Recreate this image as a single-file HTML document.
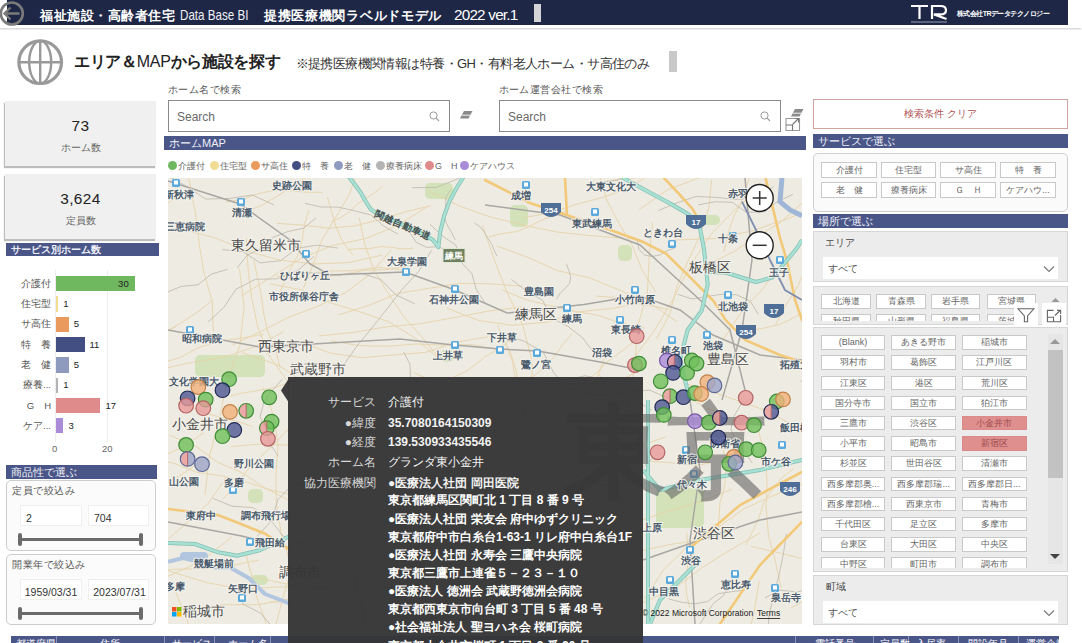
<!DOCTYPE html>
<html><head><meta charset="utf-8"><style>
*{margin:0;padding:0;box-sizing:border-box}
html,body{width:1082px;height:643px;overflow:hidden;background:#fff;font-family:"Liberation Sans",sans-serif;color:#333}
.a{position:absolute}
.l{position:absolute;white-space:nowrap}
.sec{position:absolute;background:#4b5688;color:#eef0f8;font-size:11px;line-height:14px;padding-left:5px;white-space:nowrap;overflow:hidden}
.card{position:absolute;background:#f0f0f0;box-shadow:-1px 2px 1px #bdbdbd}
.btn{position:absolute;background:#fff;border:1px solid #c9c9c9;color:#666;text-align:center;white-space:nowrap;overflow:hidden}
.gbox{position:absolute;border:1px solid #d6d6d6;background:#ececec}
</style></head><body>
<div class="a" style="left:7px;top:0px;width:1061px;height:25px;background:#1e2746"></div>
<div class="a" style="left:0px;top:28px;width:1081px;height:2px;background:linear-gradient(#d6d6da,#f2f2f4)"></div>
<svg class="a" style="left:0;top:0" width="30" height="30"><circle cx="11.8" cy="13.5" r="11" fill="none" stroke="#7a7a7a" stroke-width="2.6"/><path d="M19.5 13.5H4.5M10.5 7.5L4.5 13.5L10.5 19.5" fill="none" stroke="#7a7a7a" stroke-width="2.4"/></svg>
<div class="l" style="left:40px;top:6.5px;font-size:13px;line-height:17px;color:#fff;font-weight:bold;letter-spacing:0.5px">福祉施設・高齢者住宅</div>
<div class="l" style="left:180px;top:6px;font-size:14.5px;line-height:18.5px;color:#eef0f6;transform:scaleX(0.8);transform-origin:0 0">Data Base BI</div>
<div class="l" style="left:264px;top:6.5px;font-size:13px;line-height:17px;color:#fff;font-weight:bold;letter-spacing:0.7px">提携医療機関ラベルドモデル</div>
<div class="l" style="left:454px;top:5px;font-size:15.3px;line-height:19.3px;color:#fff;letter-spacing:-0.8px">2022 ver.1</div>
<div class="a" style="left:534px;top:4px;width:7px;height:18px;background:#d4d4d8"></div>
<svg class="a" style="left:908px;top:2px" width="42" height="22"><g fill="none" stroke="#fff" stroke-width="2.2"><path d="M3 4H20M11.5 4V17"/><path d="M24 17V4H32.5Q38 4 38 8.2Q38 12.4 32.5 12.4H26L38.5 17"/></g><rect x="3" y="19.5" width="36" height="1" fill="#9aa0b4"/></svg>
<div class="l" style="left:957px;top:7.5px;font-size:7px;line-height:11px;color:#fff;font-weight:bold;letter-spacing:-0.55px">株式会社TRデータテクノロジー</div>
<svg class="a" style="left:14px;top:36px" width="52" height="52"><g fill="none" stroke="#999"><circle cx="26.2" cy="26.2" r="21.3" stroke-width="3.2"/><ellipse cx="26.2" cy="26.2" rx="11" ry="21.3" stroke-width="2.4"/><path d="M5 26.2H47.4M26.2 5V47.4" stroke-width="2.4"/></g></svg>
<div class="l" style="left:74px;top:52px;font-size:16px;line-height:20px;color:#222;font-weight:bold;letter-spacing:-0.3px">エリア＆<span style="font-weight:normal">MAP</span>から施設を探す</div>
<div class="l" style="left:295.5px;top:55px;font-size:13px;line-height:17px;color:#333;letter-spacing:-0.58px">※提携医療機関情報は特養・GH・有料老人ホーム・サ高住のみ</div>
<div class="a" style="left:669px;top:51px;width:8px;height:21px;background:#c8c8c8"></div>
<div class="card" style="left:5px;top:101px;width:151px;height:65px"></div>
<div class="l" style="left:5px;top:116px;width:151px;text-align:center;font-size:15.4px;line-height:20px;color:#222;letter-spacing:0.4px">73</div>
<div class="l" style="left:5px;top:142px;width:151px;text-align:center;font-size:10px;line-height:12px;color:#666">ホーム数</div>
<div class="card" style="left:5px;top:174px;width:151px;height:65px"></div>
<div class="l" style="left:5px;top:189px;width:151px;text-align:center;font-size:15.4px;line-height:20px;color:#222;letter-spacing:0.4px">3,624</div>
<div class="l" style="left:5px;top:215px;width:151px;text-align:center;font-size:10px;line-height:12px;color:#666">定員数</div>
<div class="sec" style="left:6px;top:243px;width:153px;height:13px;font-weight:bold;font-size:10px;line-height:13px">サービス別ホーム数</div>
<div class="a" style="left:55px;top:270px;width:1px;height:172px;background:#eee"></div>
<div class="a" style="left:107px;top:270px;width:1px;height:172px;background:#eee"></div>
<div class="l" style="left:0;top:276.7px;width:51px;text-align:right;font-size:9.5px;line-height:14px;color:#555">介護付</div>
<div class="a" style="left:55.5px;top:276.0px;width:79.2px;height:15.4px;background:#6fb85f"></div>
<div class="l" style="left:110.7px;top:276.7px;width:18px;text-align:right;font-size:9.5px;line-height:14px;color:#222">30</div>
<div class="l" style="left:0;top:297.0px;width:51px;text-align:right;font-size:9.5px;line-height:14px;color:#555">住宅型</div>
<div class="a" style="left:55.5px;top:296.3px;width:2.8px;height:15.4px;background:#f1dc94"></div>
<div class="l" style="left:63.3px;top:297.0px;font-size:9.5px;line-height:14px;color:#222">1</div>
<div class="l" style="left:0;top:317.3px;width:51px;text-align:right;font-size:9.5px;line-height:14px;color:#555">サ高住</div>
<div class="a" style="left:55.5px;top:316.6px;width:13.2px;height:15.4px;background:#eb9a5e"></div>
<div class="l" style="left:73.7px;top:317.3px;font-size:9.5px;line-height:14px;color:#222">5</div>
<div class="l" style="left:0;top:337.6px;width:51px;text-align:right;font-size:9.5px;line-height:14px;color:#555">特　養</div>
<div class="a" style="left:55.5px;top:336.9px;width:29.0px;height:15.4px;background:#434f82"></div>
<div class="l" style="left:89.5px;top:337.6px;font-size:9.5px;line-height:14px;color:#222">11</div>
<div class="l" style="left:0;top:357.9px;width:51px;text-align:right;font-size:9.5px;line-height:14px;color:#555">老　健</div>
<div class="a" style="left:55.5px;top:357.2px;width:13.2px;height:15.4px;background:#8f9abf"></div>
<div class="l" style="left:73.7px;top:357.9px;font-size:9.5px;line-height:14px;color:#222">5</div>
<div class="l" style="left:0;top:378.2px;width:51px;text-align:right;font-size:9.5px;line-height:14px;color:#555">療養...</div>
<div class="a" style="left:55.5px;top:377.5px;width:2.8px;height:15.4px;background:#b4b4b4"></div>
<div class="l" style="left:63.3px;top:378.2px;font-size:9.5px;line-height:14px;color:#222">1</div>
<div class="l" style="left:0;top:398.5px;width:51px;text-align:right;font-size:9.5px;line-height:14px;color:#555">G　H</div>
<div class="a" style="left:55.5px;top:397.8px;width:44.9px;height:15.4px;background:#df8b8b"></div>
<div class="l" style="left:105.4px;top:398.5px;font-size:9.5px;line-height:14px;color:#222">17</div>
<div class="l" style="left:0;top:418.8px;width:51px;text-align:right;font-size:9.5px;line-height:14px;color:#555">ケア...</div>
<div class="a" style="left:55.5px;top:418.1px;width:7.9px;height:15.4px;background:#a98bd8"></div>
<div class="l" style="left:68.4px;top:418.8px;font-size:9.5px;line-height:14px;color:#222">3</div>
<div class="l" style="left:52px;top:442px;font-size:9.5px;line-height:13.5px;color:#666;">0</div>
<div class="l" style="left:102px;top:442px;font-size:9.5px;line-height:13.5px;color:#666;">20</div>
<div class="sec" style="left:6px;top:465px;width:151px;height:14px">商品性で選ぶ</div>
<div class="a" style="left:6px;top:480px;width:150px;height:71px;border:1px solid #cdcdcd;border-radius:5px;background:#fbfbfb"></div>
<div class="l" style="left:12px;top:484px;font-size:10px;line-height:14px;color:#555;letter-spacing:0.5px">定員で絞込み</div>
<div class="a" style="left:20px;top:505px;width:62px;height:21px;background:#fff;border:1px solid #efefef"></div>
<div class="a" style="left:88px;top:505px;width:61px;height:21px;background:#fff;border:1px solid #efefef"></div>
<div class="l" style="left:26px;top:511px;font-size:10.5px;line-height:14.5px;color:#333;">2</div>
<div class="l" style="left:94px;top:511px;font-size:10.5px;line-height:14.5px;color:#333;">704</div>
<div class="a" style="left:19px;top:538px;width:123px;height:3px;background:#6b6b6b"></div>
<div class="a" style="left:18px;top:533px;width:4px;height:13px;background:#6b6b6b;border-radius:2px"></div>
<div class="a" style="left:139px;top:533px;width:4px;height:13px;background:#6b6b6b;border-radius:2px"></div>
<div class="a" style="left:6px;top:554px;width:150px;height:71px;border:1px solid #cdcdcd;border-radius:5px;background:#fbfbfb"></div>
<div class="l" style="left:12px;top:558px;font-size:10px;line-height:14px;color:#555;letter-spacing:0.5px">開業年で絞込み</div>
<div class="a" style="left:20px;top:579px;width:62px;height:21px;background:#fff;border:1px solid #efefef"></div>
<div class="a" style="left:88px;top:579px;width:61px;height:21px;background:#fff;border:1px solid #efefef"></div>
<div class="l" style="left:20px;top:585px;width:62px;text-align:center;font-size:10.5px;line-height:14px;color:#333">1959/03/31</div>
<div class="l" style="left:89px;top:585px;width:61px;text-align:center;font-size:10.5px;line-height:14px;color:#333">2023/07/31</div>
<div class="a" style="left:19px;top:612px;width:123px;height:3px;background:#6b6b6b"></div>
<div class="a" style="left:18px;top:607px;width:4px;height:13px;background:#6b6b6b;border-radius:2px"></div>
<div class="a" style="left:139px;top:607px;width:4px;height:13px;background:#6b6b6b;border-radius:2px"></div>
<div class="l" style="left:168px;top:83px;font-size:10px;line-height:14px;color:#555;letter-spacing:0.45px">ホーム名で検索</div>
<div class="a" style="left:168px;top:100px;width:282px;height:32px;border:1px solid #8a8a8a;background:#fff"></div>
<div class="l" style="left:177px;top:109px;font-size:12px;line-height:16px;color:#6a6a6a;">Search</div>
<svg class="a" style="left:428px;top:110px" width="14" height="14"><circle cx="5.5" cy="5.5" r="3.6" fill="none" stroke="#999" stroke-width="1"/><path d="M8.2 8.2L11 11" stroke="#999" stroke-width="1.1"/></svg>
<svg class="a" style="left:459px;top:110px" width="14" height="10"><path d="M5 1H13.5L9.5 8.5H1Z" fill="#8a8a8a"/><path d="M3 5.2H11.5" stroke="#fff" stroke-width="0.9"/></svg>
<div class="l" style="left:498.5px;top:83px;font-size:10px;line-height:14px;color:#555;letter-spacing:0.45px">ホーム運営会社で検索</div>
<div class="a" style="left:499px;top:100px;width:282px;height:32px;border:1px solid #8a8a8a;background:#fff"></div>
<div class="l" style="left:508px;top:109px;font-size:12px;line-height:16px;color:#6a6a6a;">Search</div>
<svg class="a" style="left:759px;top:110px" width="14" height="14"><circle cx="5.5" cy="5.5" r="3.6" fill="none" stroke="#999" stroke-width="1"/><path d="M8.2 8.2L11 11" stroke="#999" stroke-width="1.1"/></svg>
<svg class="a" style="left:790px;top:108px" width="14" height="10"><path d="M5 1H13.5L9.5 8.5H1Z" fill="#8a8a8a"/><path d="M3 5.2H11.5" stroke="#fff" stroke-width="0.9"/></svg>
<svg class="a" style="left:785px;top:117px" width="16" height="14"><g fill="none" stroke="#777" stroke-width="1.1"><path d="M1 1.5H14.5V13.5H1Z" stroke="#999"/><path d="M1 8H7.5V13.5"/><path d="M7.5 7.5L13 2M9.5 1.5H13.5V5.5"/></g></svg>
<div class="sec" style="left:164px;top:136px;width:642px;height:14px">ホームMAP</div>
<div class="a" style="left:168.1px;top:161px;width:9px;height:9px;border-radius:50%;background:#6fb85f"></div>
<div class="l" style="left:178.1px;top:160px;font-size:9px;line-height:13px;color:#666;">介護付</div>
<div class="a" style="left:209.5px;top:161px;width:9px;height:9px;border-radius:50%;background:#f1dc94"></div>
<div class="l" style="left:219.5px;top:160px;font-size:9px;line-height:13px;color:#666;">住宅型</div>
<div class="a" style="left:250.7px;top:161px;width:9px;height:9px;border-radius:50%;background:#eb9a5e"></div>
<div class="l" style="left:260.7px;top:160px;font-size:9px;line-height:13px;color:#666;">サ高住</div>
<div class="a" style="left:292.2px;top:161px;width:9px;height:9px;border-radius:50%;background:#434f82"></div>
<div class="l" style="left:302.2px;top:160px;font-size:9px;line-height:13px;color:#666;">特　養</div>
<div class="a" style="left:334.0px;top:161px;width:9px;height:9px;border-radius:50%;background:#8f9abf"></div>
<div class="l" style="left:344.0px;top:160px;font-size:9px;line-height:13px;color:#666;">老　健</div>
<div class="a" style="left:375.5px;top:161px;width:9px;height:9px;border-radius:50%;background:#b4b4b4"></div>
<div class="l" style="left:385.5px;top:160px;font-size:9px;line-height:13px;color:#666;">療養病床</div>
<div class="a" style="left:425.1px;top:161px;width:9px;height:9px;border-radius:50%;background:#df8b8b"></div>
<div class="l" style="left:435.1px;top:160px;font-size:9px;line-height:13px;color:#666;">G　H</div>
<div class="a" style="left:460.3px;top:161px;width:9px;height:9px;border-radius:50%;background:#a98bd8"></div>
<div class="l" style="left:470.3px;top:160px;font-size:9px;line-height:13px;color:#666;">ケアハウス</div>
<svg class="a" style="left:168px;top:178px" width="634" height="446" viewBox="0 0 634 446"><rect width="634" height="446" fill="#eeebe2"/><rect x="27" y="177" width="70" height="22" rx="5" fill="#d3e2b8"/><rect x="257" y="5" width="28" height="16" rx="5" fill="#d3e2b8"/><rect x="342" y="27" width="18" height="22" rx="5" fill="#d3e2b8"/><rect x="450" y="67" width="14" height="16" rx="5" fill="#d3e2b8"/><rect x="80" y="311" width="15" height="14" rx="5" fill="#d3e2b8"/><rect x="488" y="310" width="48" height="40" rx="5" fill="#d3e2b8"/><rect x="272" y="172" width="14" height="12" rx="5" fill="#d3e2b8"/><rect x="532" y="37" width="20" height="10" rx="5" fill="#d3e2b8"/><rect x="82" y="397" width="18" height="10" rx="5" fill="#d3e2b8"/><g stroke="#e8d3a8" stroke-width="1" fill="none" opacity="0.85"><polyline points="191.2,39.3 196.7,66.3 206.0,92.2 220.3,115.6 235.6,138.4 253.8,159.0 271.4,180.1"/><polyline points="2.2,257.4 27.4,268.0 49.4,284.1 74.5,295.0 97.2,310.1 121.5,322.7 147.5,330.9"/><polyline points="44.1,122.3 32.1,132.3 19.1,140.9 5.8,149.2 -8.0,156.6 -21.7,164.1 -35.6,171.3"/><polyline points="514.9,204.9 544.6,213.9 573.8,224.0 603.0,234.5 629.7,250.3 654.4,268.9 680.9,284.9"/><polyline points="659.8,22.1 650.2,42.6 645.0,64.6 639.2,86.5 630.3,107.4 618.2,126.5 607.7,146.6"/><polyline points="210.0,221.3 217.8,244.2 230.4,264.9 240.8,286.7 249.6,309.3 252.7,333.3 251.8,357.5"/><polyline points="163.2,162.9 191.1,167.6 219.5,168.3 247.7,166.0 276.0,167.0 304.3,166.7 332.1,172.1"/><polyline points="314.5,47.5 326.2,81.5 339.3,114.9 354.8,147.3 363.7,182.1 364.6,218.0 371.6,253.2"/><polyline points="85.8,82.0 89.7,100.1 93.3,118.2 95.8,136.4 100.0,154.4 107.5,171.3 111.9,189.2"/><polyline points="638.5,304.5 606.9,316.9 575.9,330.8 548.3,350.6 519.5,368.4 495.2,392.1 476.6,420.5"/><polyline points="109.1,45.4 135.1,47.1 161.0,50.2 187.0,47.8 212.3,41.6 237.3,33.8 262.7,27.8"/><polyline points="642.2,276.8 653.1,298.7 667.6,318.3 679.6,339.5 689.0,362.1 698.6,384.5 706.0,407.8"/><polyline points="328.7,67.9 359.4,79.2 389.3,92.6 421.2,99.7 451.5,112.2 481.7,124.9 508.6,143.5"/><polyline points="214.0,77.2 180.4,84.6 146.1,86.0 112.0,82.2 78.9,73.0 47.1,59.9 13.9,51.2"/><polyline points="329.6,147.0 335.6,161.6 342.8,175.7 347.7,190.7 351.0,206.2 355.3,221.4 356.0,237.2"/><polyline points="17.5,13.7 -12.3,32.5 -43.4,48.9 -76.7,60.6 -106.8,78.8 -138.3,94.5 -172.4,103.5"/><polyline points="518.6,354.6 519.7,367.1 519.4,379.7 519.3,392.3 517.7,404.8 518.7,417.4 521.8,429.6"/><polyline points="669.1,-25.5 635.0,-18.3 600.5,-13.8 566.5,-6.8 532.2,-0.6 499.7,11.8 471.1,31.7"/><polyline points="653.2,301.7 687.8,297.6 721.5,289.3 754.3,277.5 785.2,261.6 816.8,247.0 846.4,228.8"/><polyline points="259.2,28.9 230.0,47.2 198.2,60.4 164.4,67.5 132.6,80.6 103.5,99.0 74.3,117.3"/><polyline points="583.2,368.4 606.8,373.8 630.3,379.7 654.1,383.6 678.0,387.8 701.7,392.6 724.5,400.7"/><polyline points="35.8,254.7 16.5,268.3 -5.0,277.8 -24.0,291.8 -41.7,307.4 -62.5,318.4 -83.9,328.3"/><polyline points="102.4,105.8 132.8,111.8 161.1,124.4 190.7,133.5 220.0,143.4 246.5,159.6 269.8,180.0"/><polyline points="57.9,24.0 74.1,21.4 89.5,15.9 105.5,12.5 121.9,12.7 138.2,14.1 154.6,14.4"/><polyline points="140.7,32.2 136.5,46.5 134.4,61.2 130.7,75.6 123.6,88.7 117.1,102.1 111.2,115.8"/><polyline points="214.6,8.5 206.2,14.9 197.5,20.7 188.7,26.5 181.3,34.1 172.4,39.7 162.7,43.9"/><polyline points="653.8,15.1 662.7,46.6 665.9,79.1 666.4,111.7 659.5,143.7 654.2,175.9 648.3,208.1"/><polyline points="327.6,220.2 348.6,211.6 371.1,207.8 393.7,205.5 416.4,206.7 438.9,203.1 461.7,203.5"/><polyline points="7.6,413.8 18.6,440.3 26.7,467.7 28.7,496.3 24.1,524.6 22.8,553.2 26.0,581.7"/><polyline points="625.6,290.7 613.4,300.0 603.8,311.9 595.7,324.9 591.0,339.5 584.6,353.5 577.9,367.3"/><polyline points="95.3,209.7 105.5,237.6 110.2,266.9 107.9,296.5 108.4,326.2 113.2,355.5 121.9,383.9"/><polyline points="101.8,423.9 136.9,423.4 172.0,425.1 206.1,433.4 240.5,440.5 275.6,439.9 310.6,442.1"/><polyline points="231.9,226.1 254.7,233.1 277.6,239.6 301.1,243.2 323.1,252.1 342.5,266.0 361.5,280.3"/><polyline points="134.5,467.9 137.8,480.0 140.0,492.3 143.8,504.3 145.9,516.6 150.5,528.3 153.2,540.5"/><polyline points="62.7,268.7 90.2,266.1 117.7,267.1 145.1,270.2 172.0,276.2 197.3,287.2 223.1,296.8"/><polyline points="192.9,478.0 226.6,469.6 260.4,461.5 293.8,452.1 328.1,446.2 362.3,440.4 397.0,441.6"/><polyline points="497.5,259.0 468.7,269.0 441.5,282.7 418.3,302.4 399.0,326.1 381.4,351.0 369.0,378.8"/><polyline points="556.8,253.8 555.5,271.7 558.1,289.4 556.8,307.2 552.0,324.5 550.8,342.4 549.3,360.2"/><polyline points="492.4,209.2 508.1,215.6 523.9,221.6 538.5,230.3 554.5,235.7 569.1,244.3 584.5,251.2"/><polyline points="-6.6,292.8 -30.5,314.6 -55.0,335.6 -73.8,361.9 -86.4,391.6 -95.5,422.6 -107.2,452.7"/><polyline points="454.2,315.4 446.3,347.5 437.7,379.3 432.1,411.9 433.3,444.9 434.9,477.8 440.0,510.5"/><polyline points="14.6,226.5 26.3,230.0 37.5,234.9 49.2,238.4 61.2,241.2 73.0,244.5 84.5,248.6"/><polyline points="159.6,19.3 162.5,29.6 165.4,40.0 168.6,50.2 172.7,60.1 178.6,69.1 185.2,77.6"/><polyline points="185.7,402.0 216.1,378.8 240.0,349.0 267.3,322.3 291.1,292.5 307.9,258.2 322.8,223.0"/><polyline points="581.2,0.2 576.4,12.3 572.9,24.9 566.8,36.4 562.2,48.6 559.0,61.3 555.8,73.9"/><polyline points="95.6,156.4 73.9,160.0 52.1,163.1 31.0,169.3 11.6,179.8 -9.5,185.9 -30.4,193.0"/><polyline points="399.0,32.9 385.9,37.1 373.1,42.3 360.9,48.8 348.0,53.7 334.3,55.5 320.9,58.9"/><polyline points="428.4,118.2 440.6,118.9 452.6,121.5 464.5,124.4 476.5,127.1 488.6,128.7 500.5,131.8"/><polyline points="265.2,248.1 272.4,263.7 279.1,279.5 282.6,296.3 284.0,313.5 286.1,330.5 289.0,347.4"/><polyline points="334.3,158.2 339.8,170.8 344.5,183.8 346.8,197.4 351.0,210.5 356.6,223.1 363.8,234.8"/><polyline points="245.4,194.5 258.1,200.1 269.9,207.3 280.4,216.2 288.6,227.3 296.9,238.4 307.3,247.5"/><polyline points="624.2,448.2 640.7,445.8 657.4,447.3 674.0,445.5 690.7,446.5 707.2,449.1 723.0,454.5"/><polyline points="598.9,4.7 570.0,28.7 543.6,55.5 522.6,86.7 505.6,120.2 486.4,152.5 464.0,182.7"/><polyline points="40.1,-3.0 72.9,-10.5 105.9,-17.4 139.6,-16.0 173.2,-18.3 206.5,-23.7 240.2,-23.4"/><polyline points="133.0,236.8 120.1,251.1 107.2,265.3 93.1,278.4 79.5,292.0 67.7,307.1 54.7,321.3"/><polyline points="620.6,79.3 605.9,95.5 593.0,113.2 577.2,128.4 565.1,146.6 553.0,164.9 543.8,184.7"/><polyline points="506.8,62.0 545.4,60.6 583.2,53.2 619.6,40.6 655.6,26.6 692.5,15.5 731.0,13.0"/><polyline points="64.5,167.0 92.8,153.5 120.7,139.3 149.9,128.2 178.0,114.4 202.9,95.4 223.3,71.7"/><polyline points="78.3,60.3 80.0,90.2 83.7,119.9 89.8,149.2 100.7,177.1 118.1,201.4 138.1,223.7"/><polyline points="210.9,462.6 201.1,494.2 186.7,523.9 178.6,556.0 167.2,587.0 160.7,619.4 153.6,651.7"/><polyline points="278.7,130.1 310.7,142.5 344.7,147.3 378.9,144.2 411.7,133.7 445.8,130.3 479.3,122.7"/><polyline points="493.6,432.6 482.4,434.3 471.1,434.8 459.9,433.0 448.6,432.3 437.5,430.3 426.5,427.9"/><polyline points="535.2,457.9 502.3,478.1 470.5,500.2 441.7,526.0 413.8,552.9 386.0,579.8 353.1,600.2"/><polyline points="90.6,382.2 73.9,385.5 57.2,389.2 40.1,390.5 23.1,390.9 6.0,391.3 -11.0,392.6"/><polyline points="74.2,174.5 111.3,187.7 144.2,209.4 179.4,227.2 217.4,237.3 256.8,239.6 296.1,241.9"/><polyline points="466.8,195.1 451.4,202.5 435.2,207.8 418.4,210.9 401.4,211.6 384.5,214.1 368.1,218.4"/><polyline points="151.1,93.6 165.7,92.9 180.3,92.8 194.8,91.4 209.3,89.3 223.8,90.7 238.3,92.2"/><polyline points="125.2,385.2 114.9,420.2 105.5,455.5 98.3,491.3 84.6,525.1 75.5,560.4 74.4,596.9"/><polyline points="388.8,395.5 410.1,385.8 432.6,379.1 456.1,377.6 478.7,371.6 501.7,366.6 524.9,363.0"/><polyline points="115.4,153.9 87.1,168.7 56.8,178.9 25.2,184.2 -6.0,190.9 -36.8,199.5 -68.0,206.3"/><polyline points="15.6,-23.4 21.8,5.8 27.5,35.2 31.0,64.9 35.9,94.4 44.2,123.2 45.3,153.1"/><polyline points="436.8,179.8 428.4,200.7 415.2,218.8 403.2,237.9 394.2,258.5 382.9,277.9 374.6,298.9"/><polyline points="-35.8,434.3 -38.2,458.0 -34.7,481.5 -31.9,505.2 -30.8,529.0 -34.5,552.5 -33.4,576.3"/><polyline points="404.2,155.1 394.7,166.8 385.8,179.1 375.5,190.2 363.6,199.6 350.5,207.2 338.2,216.0"/><polyline points="557.8,-17.1 537.0,-11.2 515.9,-6.6 494.3,-5.5 473.2,-0.7 451.6,1.0 430.5,5.7"/><polyline points="248.8,405.2 266.4,439.1 286.2,471.6 311.5,500.2 329.4,533.9 341.8,570.0 359.5,603.8"/><polyline points="591.1,403.1 586.7,430.8 580.7,458.1 577.3,485.9 575.0,513.8 571.5,541.6 569.1,569.4"/><polyline points="430.4,195.0 441.4,216.3 451.1,238.2 457.2,261.4 459.3,285.2 457.8,309.1 457.4,333.1"/><polyline points="7.9,148.6 -2.1,153.7 -10.8,160.8 -20.3,166.7 -30.5,171.4 -40.8,175.9 -49.8,182.6"/><polyline points="319.8,158.8 288.3,164.2 258.0,174.3 226.1,176.9 194.3,179.7 162.7,175.2 132.6,164.2"/><polyline points="77.9,374.7 81.0,389.1 85.7,403.1 88.2,417.7 93.2,431.5 98.2,445.4 100.2,460.1"/><polyline points="108.7,98.3 130.8,99.9 152.9,99.1 174.8,96.4 196.5,92.3 218.6,91.5 240.5,88.1"/><polyline points="508.5,-14.5 483.1,-4.3 460.1,10.6 434.2,19.5 407.7,26.6 381.7,35.2 354.7,39.8"/><polyline points="149.0,481.0 150.5,497.8 148.2,514.6 147.5,531.5 146.7,548.3 147.6,565.2 144.5,581.8"/><polyline points="581.4,448.4 594.4,454.7 607.6,460.6 620.8,466.6 632.6,475.1 645.7,481.2 659.5,485.6"/><polyline points="426.3,-28.3 431.4,-2.7 438.9,22.2 450.9,45.3 464.3,67.5 474.0,91.7 487.6,113.9"/><polyline points="-29.9,381.6 4.0,393.9 38.6,404.6 74.1,411.1 110.2,408.9 146.3,409.2 182.4,410.7"/><polyline points="210.1,299.6 224.4,295.1 237.3,287.6 248.1,277.3 257.2,265.4 264.1,252.1 273.6,240.5"/><polyline points="34.9,282.2 11.4,298.0 -13.1,312.0 -39.5,322.0 -63.9,336.2 -86.9,352.6 -108.1,371.2"/><polyline points="-5.4,427.8 -10.4,459.8 -19.2,490.9 -27.3,522.2 -31.1,554.4 -28.4,586.6 -21.5,618.2"/><polyline points="-12.3,136.5 -23.5,139.5 -34.8,141.6 -46.4,142.5 -57.9,141.1 -68.7,137.0 -79.9,134.1"/><polyline points="623.0,430.3 652.8,411.5 679.0,387.9 709.5,370.2 736.9,348.0 763.0,324.4 790.3,302.1"/><polyline points="230.9,408.1 207.2,412.1 183.1,413.8 159.2,411.1 135.2,409.2 111.6,404.6 88.1,399.2"/><polyline points="179.7,71.5 190.7,70.7 201.7,70.6 212.5,68.6 223.5,69.3 234.3,71.0 245.3,70.2"/><polyline points="58.8,298.5 40.1,325.5 15.7,347.6 -9.0,369.2 -35.4,388.8 -65.0,403.0 -96.2,413.3"/><polyline points="467.8,161.9 458.1,170.0 447.9,177.4 437.8,185.0 429.2,194.2 419.4,202.2 409.0,209.3"/><polyline points="170.2,137.0 200.3,127.6 229.3,115.5 260.4,110.4 291.4,105.3 322.9,105.8 354.3,108.2"/><polyline points="-17.9,177.2 -27.3,183.7 -37.4,189.1 -48.2,192.8 -59.2,196.1 -69.7,200.5 -80.1,205.3"/><polyline points="333.8,111.7 356.6,121.3 380.6,127.2 404.7,133.0 429.1,137.0 452.5,145.0 476.7,150.1"/><polyline points="633.9,109.2 671.6,103.5 709.3,97.5 747.3,100.9 785.2,105.4 823.3,102.5 860.9,96.2"/><polyline points="27.9,448.4 20.0,455.6 12.9,463.7 4.3,470.2 -4.2,476.8 -12.3,483.8 -21.7,489.2"/><polyline points="126.8,202.4 116.4,206.2 106.0,209.9 95.1,211.6 84.3,213.5 73.4,215.2 62.7,217.8"/><polyline points="290.7,322.4 264.5,348.0 242.5,377.2 223.6,408.4 201.6,437.6 174.9,462.6 152.9,491.8"/><polyline points="71.4,90.2 76.1,128.6 72.0,167.1 58.6,203.4 51.4,241.4 41.3,278.7 37.0,317.1"/><polyline points="67.8,38.0 94.7,26.8 119.7,11.8 143.8,-4.6 163.4,-26.1 182.0,-48.6 203.6,-68.1"/><polyline points="455.1,223.3 437.8,250.4 424.2,279.5 405.7,305.7 384.6,330.0 362.5,353.3 338.7,375.0"/><polyline points="564.0,311.3 530.8,324.1 496.8,334.4 463.0,345.6 430.4,359.9 397.0,372.0 366.7,390.6"/><polyline points="259.6,371.5 263.1,395.8 262.2,420.2 261.2,444.7 258.1,469.0 250.6,492.3 238.7,513.7"/><polyline points="194.2,-34.4 189.6,-8.5 181.4,16.5 167.9,39.0 154.2,61.5 145.2,86.2 135.3,110.6"/><polyline points="346.3,337.3 326.5,341.8 306.8,346.7 286.5,346.7 266.5,349.9 246.5,352.9 226.2,351.6"/><polyline points="480.6,283.0 490.9,284.0 501.3,284.6 511.6,286.2 522.0,287.0 532.3,286.7 542.6,284.9"/><polyline points="489.4,454.4 499.6,476.0 505.0,499.2 515.2,520.8 522.1,543.6 532.4,565.2 541.1,587.4"/><polyline points="474.6,388.5 474.0,412.5 472.8,436.5 476.1,460.4 475.4,484.4 476.4,508.4 473.2,532.3"/><polyline points="150.9,157.9 184.9,154.5 218.6,148.8 252.6,145.7 286.3,139.6 319.8,133.2 353.7,128.9"/><polyline points="21.0,431.8 55.5,426.8 90.3,426.7 124.6,420.4 159.4,419.9 194.2,421.6 228.4,414.9"/><polyline points="-31.8,460.6 3.8,460.6 39.4,459.7 74.8,463.9 110.4,462.8 145.9,460.1 181.5,458.0"/><polyline points="395.2,321.9 361.8,326.3 329.5,335.7 296.5,341.9 263.3,347.6 229.7,349.3 196.2,352.0"/><polyline points="590.2,252.0 597.3,277.7 599.0,304.4 598.1,331.1 600.6,357.7 607.4,383.5 613.0,409.6"/><polyline points="484.5,44.3 481.2,79.4 479.4,114.6 469.6,148.4 467.1,183.5 462.2,218.4 455.0,252.9"/><polyline points="-19.6,280.7 5.3,285.1 28.9,294.3 53.9,297.9 78.5,304.1 102.6,311.9 127.2,317.7"/><polyline points="575.2,152.6 593.7,150.7 611.7,146.5 628.4,138.4 644.1,128.6 659.1,117.6 674.0,106.7"/><polyline points="198.3,477.7 206.5,510.5 217.6,542.4 231.9,572.9 244.8,604.1 255.7,636.1 261.8,669.3"/><polyline points="-11.4,340.1 -8.7,353.1 -8.1,366.3 -7.3,379.6 -8.3,392.8 -6.4,405.9 -4.5,419.0"/><polyline points="348.2,157.8 338.3,165.4 327.9,172.4 317.1,178.7 307.5,186.7 297.3,193.8 285.9,199.0"/><polyline points="261.0,12.9 291.1,27.9 322.7,39.1 355.4,47.1 388.3,53.9 421.7,57.6 455.2,60.2"/><polyline points="418.2,451.2 447.6,435.7 478.4,423.2 508.5,409.2 534.9,389.1 563.0,371.4 591.9,355.1"/><polyline points="669.1,306.8 695.0,293.1 718.1,275.0 736.2,252.0 748.2,225.2 762.5,199.6 771.7,171.7"/><polyline points="650.0,6.4 632.2,26.8 612.1,44.9 588.6,58.4 566.1,73.5 541.9,85.6 516.7,95.3"/><polyline points="63.4,359.4 33.5,382.9 -0.9,398.8 -36.9,410.9 -68.9,431.4 -95.0,459.0 -123.2,484.5"/><polyline points="543.6,1.9 540.9,30.1 532.1,56.9 520.3,82.6 508.8,108.4 501.8,135.8 488.7,160.8"/></g><g stroke="#bdb7ab" stroke-width="0.8" fill="none"><polyline points="74.0,425.4 92.9,435.4 106.7,451.7 121.4,467.1 140.3,477.1 154.5,493.1 172.0,505.4"/><polyline points="177.5,277.3 165.1,294.8 145.8,303.9 124.6,306.5 109.7,321.9 103.8,342.4 89.3,358.1"/><polyline points="370.7,435.5 382.0,443.2 389.7,454.7 401.0,462.5 412.8,469.6 422.4,479.5 434.1,486.8"/><polyline points="169.9,70.1 149.5,67.1 129.1,70.2 112.6,82.7 92.1,84.9 74.9,73.5 54.3,71.6"/><polyline points="618.4,355.6 615.3,376.3 611.1,396.8 605.9,417.0 601.0,437.3 599.6,458.2 590.1,476.8"/><polyline points="457.9,438.1 463.1,443.8 466.5,450.7 465.4,458.4 463.4,465.8 466.5,472.9 470.8,479.3"/><polyline points="342.7,239.1 347.1,245.6 351.3,252.2 357.5,257.0 360.8,264.1 365.7,270.1 370.7,276.2"/><polyline points="128.0,94.9 149.4,94.8 170.8,97.0 192.1,95.0 212.6,101.3 227.6,116.7 246.9,125.8"/><polyline points="584.9,220.0 572.9,226.1 566.3,237.9 562.9,250.9 568.1,263.3 576.9,273.5 584.1,285.0"/><polyline points="59.6,91.3 43.3,96.1 30.1,106.8 13.2,108.4 -2.6,115.0 -12.3,128.9 -21.0,143.6"/><polyline points="376.0,271.5 397.8,275.6 411.9,292.6 428.8,307.0 450.9,308.0 469.1,295.4 484.7,279.7"/><polyline points="447.3,217.1 424.3,216.6 401.7,211.6 385.8,194.9 375.3,174.3 355.4,162.8 333.2,156.6"/><polyline points="147.9,40.0 135.6,50.2 120.0,53.5 105.2,59.4 93.5,70.4 79.2,77.2 69.3,89.8"/><polyline points="597.0,419.8 612.0,412.1 628.7,414.0 645.1,410.2 661.5,406.7 678.2,408.8 693.0,416.8"/><polyline points="306.5,45.1 312.2,48.8 316.3,54.2 319.6,60.0 323.5,65.6 326.0,71.9 328.9,78.0"/><polyline points="235.7,174.0 241.9,186.1 242.5,199.7 235.5,211.4 223.5,217.8 211.7,224.7 198.1,224.0"/><polyline points="506.5,70.0 498.9,72.8 491.9,77.0 484.0,78.5 476.1,76.9 470.7,70.8 469.6,62.8"/><polyline points="244.1,9.7 268.6,9.4 291.3,0.2 306.1,-19.3 317.0,-41.3 322.5,-65.2 335.4,-86.0"/><polyline points="114.3,201.3 104.4,212.3 95.9,224.3 92.1,238.5 97.8,252.0 102.2,266.1 110.3,278.3"/><polyline points="509.8,116.3 524.1,121.0 538.9,118.5 553.8,116.3 568.8,116.8 582.4,123.2 590.1,136.1"/><polyline points="355.0,372.5 365.5,390.2 377.6,406.7 394.5,418.3 414.4,423.2 434.8,420.6 454.5,414.9"/><polyline points="263.5,72.3 250.7,93.4 234.1,111.5 219.0,130.9 203.7,150.2 188.1,169.2 174.1,189.4"/><polyline points="500.6,420.9 513.4,424.2 526.6,425.9 539.6,423.5 550.3,415.7 563.5,413.7 576.6,412.1"/><polyline points="146.1,78.3 129.5,92.6 109.2,100.8 87.4,101.3 67.9,111.3 55.8,129.5 39.8,144.3"/><polyline points="398.4,85.7 400.7,92.2 402.7,98.7 401.6,105.5 396.9,110.5 392.1,115.3 388.4,121.1"/><polyline points="178.6,285.1 170.7,287.5 162.4,286.9 154.9,290.5 146.7,292.2 139.7,296.7 132.3,300.5"/><polyline points="624.9,16.4 609.3,23.6 595.5,33.8 578.3,34.3 564.3,24.3 547.1,23.8 530.2,26.8"/><polyline points="155.2,370.2 134.8,365.2 115.1,358.1 102.2,341.6 85.0,329.6 64.1,328.2 44.7,320.3"/><polyline points="283.0,11.4 277.9,19.0 277.7,28.1 276.0,37.1 278.5,45.9 283.2,53.7 287.3,61.9"/><polyline points="605.7,8.7 588.6,19.5 568.5,21.4 548.4,19.4 528.2,18.4 509.0,24.8 490.4,32.6"/><polyline points="222.3,41.9 232.5,47.6 241.9,54.5 248.2,64.3 258.7,69.4 270.4,68.6 280.8,73.8"/><polyline points="343.4,101.4 358.3,113.0 374.8,122.4 382.6,139.6 399.5,148.1 414.5,159.7 425.8,174.9"/><polyline points="378.5,268.8 399.8,256.8 418.5,241.0 434.7,222.7 457.5,213.9 481.9,212.2 504.3,222.0"/><polyline points="357.8,439.7 364.3,452.1 373.6,462.6 386.7,467.5 398.2,475.4 411.1,480.9 419.6,492.0"/><polyline points="420.4,5.2 430.5,6.1 440.1,2.9 450.1,2.1 459.1,-2.5 467.6,-8.1 475.1,-14.8"/><polyline points="632.4,202.4 649.4,220.2 673.7,224.3 692.9,239.7 709.2,258.2 712.6,282.6 711.8,307.2"/><polyline points="398.3,359.6 406.1,356.2 410.0,348.6 410.8,340.1 406.5,332.8 399.0,328.8 390.8,326.5"/><polyline points="105.9,26.9 84.5,17.0 61.2,20.5 37.6,21.0 18.0,8.1 -2.7,-3.2 -23.2,-14.8"/><polyline points="561.2,408.4 554.9,418.2 545.6,425.4 538.9,434.9 532.8,444.9 524.3,452.9 519.4,463.5"/><polyline points="245.1,244.7 259.8,262.4 275.1,279.6 281.4,301.7 299.9,315.4 321.1,324.5 344.1,323.7"/><polyline points="346.1,432.4 363.0,448.9 366.9,472.2 376.3,493.9 390.7,512.6 410.3,525.8 420.6,547.0"/><polyline points="137.0,25.4 153.4,29.0 170.2,29.1 186.5,32.8 202.8,36.9 215.4,47.9 230.0,56.2"/><polyline points="483.6,232.3 467.6,222.0 450.5,213.5 435.8,201.3 417.0,197.8 398.4,202.0 379.4,203.4"/><polyline points="175.5,374.2 189.5,391.6 189.3,413.9 196.1,435.2 199.0,457.4 197.7,479.7 190.2,500.8"/><polyline points="261.9,46.1 274.1,57.6 287.8,67.2 292.3,83.3 303.8,95.4 308.3,111.6 317.5,125.6"/></g><g stroke="#a9a7a3" stroke-width="1.5" fill="none"><polyline points="0.0,3.0 72.0,26.0 122.0,62.0 142.0,86.0 162.0,97.0 237.0,94.0 287.0,112.0 339.0,135.0 416.0,126.4 443.0,122.0 472.0,118.0 512.0,132.0 545.0,157.0 592.0,177.0 634.0,182.0"/><polyline points="0.0,152.0 92.0,169.0 232.0,161.0 281.0,166.4 332.0,171.0 369.8,173.0 432.0,184.0 472.0,192.0"/><polyline points="317.0,27.0 392.0,37.0 472.0,67.0 532.0,122.0 562.0,152.0 577.0,212.0"/><polyline points="577.0,0.0 584.0,82.0 574.0,152.0 554.0,222.0"/><polyline points="0.0,344.0 73.7,358.0 122.0,370.0"/><polyline points="475.0,382.0 532.0,362.0 592.0,342.0 634.0,334.0"/><polyline points="522.0,222.0 532.0,292.0 522.0,362.0 527.0,446.0"/></g><g stroke="#f2c979" stroke-width="2.6" fill="none" stroke-linecap="round"><polyline points="317.0,2.0 362.0,25.0 394.0,35.5 439.0,50.8 474.7,63.8 498.0,75.6 524.4,101.6 545.6,123.0 557.4,141.8 577.0,162.0 612.0,177.0 634.0,184.0"/><polyline points="397.0,0.0 399.0,37.0"/><polyline points="597.6,0.0 611.8,59.0 618.9,82.7 627.0,122.0 634.0,142.0"/><polyline points="0.0,331.0 50.0,337.0 73.7,346.3 97.0,355.7 122.0,372.0"/><polyline points="522.0,370.0 572.0,327.0 634.0,294.0"/><polyline points="552.0,446.0 592.0,387.0 634.0,344.0"/><polyline points="496.0,0.0 512.0,17.0 524.4,30.7 532.0,44.0"/></g><g stroke="#7fbfb3" stroke-width="4" fill="none" stroke-linejoin="round"><polyline points="180.9,-1.0 188.0,8.0 193.4,15.7 198.0,24.0 202.8,31.4 212.0,37.5 224.8,42.4 240.0,49.0 256.3,56.6 265.0,62.0 270.4,69.1 272.0,55.0 276.0,38.0 281.4,23.6 288.0,11.0 295.5,-1.0"/><polyline points="453.5,-1.0 477.0,12.0 503.0,26.0 520.0,36.0 531.4,47.3 536.0,71.0 539.7,106.4 533.8,132.4 519.6,152.0 512.0,182.0 522.0,222.0"/><polyline points="539.0,94.0 557.4,94.5 588.0,104.0 604.7,99.3 628.3,71.0 634.0,62.0"/><polyline points="475.0,292.0 492.0,312.0 532.0,302.0 592.0,292.0 634.0,282.0"/><polyline points="480.0,222.0 480.0,446.0"/><polyline points="532.0,382.0 492.0,422.0 482.0,446.0"/><polyline points="0.0,365.0 27.0,366.0 50.3,374.3 69.0,377.8 92.3,372.0 122.0,358.0"/></g><g stroke="#a9e0d4" stroke-width="2.6" fill="none" stroke-linejoin="round"><polyline points="180.9,-1.0 188.0,8.0 193.4,15.7 198.0,24.0 202.8,31.4 212.0,37.5 224.8,42.4 240.0,49.0 256.3,56.6 265.0,62.0 270.4,69.1 272.0,55.0 276.0,38.0 281.4,23.6 288.0,11.0 295.5,-1.0"/><polyline points="453.5,-1.0 477.0,12.0 503.0,26.0 520.0,36.0 531.4,47.3 536.0,71.0 539.7,106.4 533.8,132.4 519.6,152.0 512.0,182.0 522.0,222.0"/><polyline points="539.0,94.0 557.4,94.5 588.0,104.0 604.7,99.3 628.3,71.0 634.0,62.0"/><polyline points="475.0,292.0 492.0,312.0 532.0,302.0 592.0,292.0 634.0,282.0"/><polyline points="480.0,222.0 480.0,446.0"/><polyline points="532.0,382.0 492.0,422.0 482.0,446.0"/><polyline points="0.0,365.0 27.0,366.0 50.3,374.3 69.0,377.8 92.3,372.0 122.0,358.0"/></g><polyline points="614.0,-1.0 612.0,23.6 622.0,32.0 634.0,37.8" stroke="#9fb6d6" stroke-width="5" fill="none"/><polyline points="574.0,23.6 588.0,52.0 602.0,82.0 617.0,112.0 634.0,122.0" stroke="#7f8fb0" stroke-width="1.8" fill="none"/><polyline points="0.0,383.7 15.0,380.0 32.0,384.0 47.0,389.5 62.0,389.5 80.7,400.0 97.0,416.0 122.0,425.7" stroke="#b2c6e0" stroke-width="4" fill="none" stroke-linejoin="round"/><rect x="12" y="374" width="28" height="8" rx="4" fill="#b2c6e0"/><path d="M373,25 H393 V34 Q383,44 373,34Z" fill="#4f6f98"/><text x="383" y="35" font-size="8" fill="#fff" text-anchor="middle" font-weight="bold" font-family="Liberation Sans">254</text><path d="M518,37 H538 V46 Q528,56 518,46Z" fill="#4f6f98"/><text x="528" y="47" font-size="8" fill="#fff" text-anchor="middle" font-weight="bold" font-family="Liberation Sans">17</text><path d="M568,147 H588 V156 Q578,166 568,156Z" fill="#4f6f98"/><text x="578" y="157" font-size="8" fill="#fff" text-anchor="middle" font-weight="bold" font-family="Liberation Sans">254</text><path d="M596,126 H616 V135 Q606,145 596,135Z" fill="#4f6f98"/><text x="606" y="136" font-size="8" fill="#fff" text-anchor="middle" font-weight="bold" font-family="Liberation Sans">17</text><path d="M612,304 H632 V313 Q622,323 612,313Z" fill="#4f6f98"/><text x="622" y="314" font-size="8" fill="#fff" text-anchor="middle" font-weight="bold" font-family="Liberation Sans">246</text><rect x="4" y="1" width="8" height="8" rx="1.5" fill="#5ca9dc"/><rect x="6" y="2.5" width="4" height="4" fill="#fff"/><rect x="69" y="20" width="8" height="8" rx="1.5" fill="#5ca9dc"/><rect x="71" y="21.5" width="4" height="4" fill="#fff"/><rect x="134" y="72" width="8" height="8" rx="1.5" fill="#5ca9dc"/><rect x="136" y="73.5" width="4" height="4" fill="#fff"/><rect x="234" y="90" width="8" height="8" rx="1.5" fill="#5ca9dc"/><rect x="236" y="91.5" width="4" height="4" fill="#fff"/><rect x="283" y="107" width="8" height="8" rx="1.5" fill="#5ca9dc"/><rect x="285" y="108.5" width="4" height="4" fill="#fff"/><rect x="283" y="163" width="8" height="8" rx="1.5" fill="#5ca9dc"/><rect x="285" y="164.5" width="4" height="4" fill="#fff"/><rect x="18" y="148" width="8" height="8" rx="1.5" fill="#5ca9dc"/><rect x="20" y="149.5" width="4" height="4" fill="#fff"/><rect x="354" y="3" width="8" height="8" rx="1.5" fill="#5ca9dc"/><rect x="356" y="4.5" width="4" height="4" fill="#fff"/><rect x="423" y="30" width="8" height="8" rx="1.5" fill="#5ca9dc"/><rect x="425" y="31.5" width="4" height="4" fill="#fff"/><rect x="500" y="62" width="8" height="8" rx="1.5" fill="#5ca9dc"/><rect x="502" y="63.5" width="4" height="4" fill="#fff"/><rect x="561" y="54" width="8" height="8" rx="1.5" fill="#5ca9dc"/><rect x="563" y="55.5" width="4" height="4" fill="#fff"/><rect x="608" y="78" width="8" height="8" rx="1.5" fill="#5ca9dc"/><rect x="610" y="79.5" width="4" height="4" fill="#fff"/><rect x="556" y="113" width="8" height="8" rx="1.5" fill="#5ca9dc"/><rect x="558" y="114.5" width="4" height="4" fill="#fff"/><rect x="363" y="110" width="8" height="8" rx="1.5" fill="#5ca9dc"/><rect x="365" y="111.5" width="4" height="4" fill="#fff"/><rect x="463" y="108" width="8" height="8" rx="1.5" fill="#5ca9dc"/><rect x="465" y="109.5" width="4" height="4" fill="#fff"/><rect x="395" y="126" width="8" height="8" rx="1.5" fill="#5ca9dc"/><rect x="397" y="127.5" width="4" height="4" fill="#fff"/><rect x="328" y="168" width="8" height="8" rx="1.5" fill="#5ca9dc"/><rect x="330" y="169.5" width="4" height="4" fill="#fff"/><rect x="365" y="171" width="8" height="8" rx="1.5" fill="#5ca9dc"/><rect x="367" y="172.5" width="4" height="4" fill="#fff"/><rect x="448" y="138" width="8" height="8" rx="1.5" fill="#5ca9dc"/><rect x="450" y="139.5" width="4" height="4" fill="#fff"/><rect x="500" y="158" width="8" height="8" rx="1.5" fill="#5ca9dc"/><rect x="502" y="159.5" width="4" height="4" fill="#fff"/><rect x="535" y="153" width="8" height="8" rx="1.5" fill="#5ca9dc"/><rect x="537" y="154.5" width="4" height="4" fill="#fff"/><rect x="514" y="268" width="8" height="8" rx="1.5" fill="#5ca9dc"/><rect x="516" y="269.5" width="4" height="4" fill="#fff"/><rect x="522" y="292" width="8" height="8" rx="1.5" fill="#5ca9dc"/><rect x="524" y="293.5" width="4" height="4" fill="#fff"/><rect x="518" y="368" width="8" height="8" rx="1.5" fill="#5ca9dc"/><rect x="520" y="369.5" width="4" height="4" fill="#fff"/><rect x="563" y="392" width="8" height="8" rx="1.5" fill="#5ca9dc"/><rect x="565" y="393.5" width="4" height="4" fill="#fff"/><rect x="498" y="398" width="8" height="8" rx="1.5" fill="#5ca9dc"/><rect x="500" y="399.5" width="4" height="4" fill="#fff"/><rect x="603" y="406" width="8" height="8" rx="1.5" fill="#5ca9dc"/><rect x="605" y="407.5" width="4" height="4" fill="#fff"/><rect x="18" y="333" width="8" height="8" rx="1.5" fill="#5ca9dc"/><rect x="20" y="334.5" width="4" height="4" fill="#fff"/><rect x="78" y="360" width="8" height="8" rx="1.5" fill="#5ca9dc"/><rect x="80" y="361.5" width="4" height="4" fill="#fff"/><rect x="61" y="308" width="8" height="8" rx="1.5" fill="#5ca9dc"/><rect x="63" y="309.5" width="4" height="4" fill="#fff"/><rect x="70" y="416" width="8" height="8" rx="1.5" fill="#5ca9dc"/><rect x="72" y="417.5" width="4" height="4" fill="#fff"/><rect x="610" y="263" width="8" height="8" rx="1.5" fill="#5ca9dc"/><rect x="612" y="264.5" width="4" height="4" fill="#fff"/><text x="447" y="274" font-size="102" fill="#666" opacity="0.6" font-weight="bold" text-anchor="middle" dominant-baseline="central" font-family="Liberation Sans">東</text><text x="548" y="274" font-size="102" fill="#666" opacity="0.6" font-weight="bold" text-anchor="middle" dominant-baseline="central" font-family="Liberation Sans">京</text><text x="124" y="7" font-size="9.5" fill="#48596b" font-weight="bold" text-anchor="middle" dominant-baseline="central" font-family="Liberation Sans" opacity="1" stroke="#f6f4ee" stroke-width="2" stroke-opacity="0.85" paint-order="stroke">史跡公園</text><text x="74" y="34.5" font-size="9.5" fill="#48596b" font-weight="bold" text-anchor="middle" dominant-baseline="central" font-family="Liberation Sans" opacity="1" stroke="#f6f4ee" stroke-width="2" stroke-opacity="0.85" paint-order="stroke">清瀬</text><text x="11" y="16.599999999999994" font-size="9.5" fill="#48596b" font-weight="bold" text-anchor="middle" dominant-baseline="central" font-family="Liberation Sans" opacity="1" stroke="#f6f4ee" stroke-width="2" stroke-opacity="0.85" paint-order="stroke">新秋津</text><text x="17" y="48" font-size="9.5" fill="#48596b" font-weight="bold" text-anchor="middle" dominant-baseline="central" font-family="Liberation Sans" opacity="1" stroke="#f6f4ee" stroke-width="2" stroke-opacity="0.85" paint-order="stroke">三恵病院</text><text x="137" y="97" font-size="9.5" fill="#48596b" font-weight="bold" text-anchor="middle" dominant-baseline="central" font-family="Liberation Sans" opacity="1" stroke="#f6f4ee" stroke-width="2" stroke-opacity="0.85" paint-order="stroke">ひばりヶ丘</text><text x="239" y="83" font-size="9.5" fill="#48596b" font-weight="bold" text-anchor="middle" dominant-baseline="central" font-family="Liberation Sans" opacity="1" stroke="#f6f4ee" stroke-width="2" stroke-opacity="0.85" paint-order="stroke">大泉学園</text><text x="135.5" y="118" font-size="9.5" fill="#48596b" font-weight="bold" text-anchor="middle" dominant-baseline="central" font-family="Liberation Sans" opacity="1" stroke="#f6f4ee" stroke-width="2" stroke-opacity="0.85" paint-order="stroke">市役所保谷庁舎</text><text x="286" y="121" font-size="9.5" fill="#48596b" font-weight="bold" text-anchor="middle" dominant-baseline="central" font-family="Liberation Sans" opacity="1" stroke="#f6f4ee" stroke-width="2" stroke-opacity="0.85" paint-order="stroke">石神井公園</text><text x="33.69999999999999" y="160.60000000000002" font-size="9.5" fill="#48596b" font-weight="bold" text-anchor="middle" dominant-baseline="central" font-family="Liberation Sans" opacity="1" stroke="#f6f4ee" stroke-width="2" stroke-opacity="0.85" paint-order="stroke">昭和病院</text><text x="279.7" y="177.8" font-size="9.5" fill="#48596b" font-weight="bold" text-anchor="middle" dominant-baseline="central" font-family="Liberation Sans" opacity="1" stroke="#f6f4ee" stroke-width="2" stroke-opacity="0.85" paint-order="stroke">上井草</text><text x="26" y="203.7" font-size="9.5" fill="#48596b" font-weight="bold" text-anchor="middle" dominant-baseline="central" font-family="Liberation Sans" opacity="1" stroke="#f6f4ee" stroke-width="2" stroke-opacity="0.85" paint-order="stroke">文化学園大</text><text x="353" y="17" font-size="9.5" fill="#48596b" font-weight="bold" text-anchor="middle" dominant-baseline="central" font-family="Liberation Sans" opacity="1" stroke="#f6f4ee" stroke-width="2" stroke-opacity="0.85" paint-order="stroke">成増</text><text x="443" y="8.599999999999994" font-size="9.5" fill="#48596b" font-weight="bold" text-anchor="middle" dominant-baseline="central" font-family="Liberation Sans" opacity="1" stroke="#f6f4ee" stroke-width="2" stroke-opacity="0.85" paint-order="stroke">大東文化大</text><text x="424" y="45" font-size="9.5" fill="#48596b" font-weight="bold" text-anchor="middle" dominant-baseline="central" font-family="Liberation Sans" opacity="1" stroke="#f6f4ee" stroke-width="2" stroke-opacity="0.85" paint-order="stroke">東武練馬</text><text x="494.5" y="54.599999999999994" font-size="9.5" fill="#48596b" font-weight="bold" text-anchor="middle" dominant-baseline="central" font-family="Liberation Sans" opacity="1" stroke="#f6f4ee" stroke-width="2" stroke-opacity="0.85" paint-order="stroke">ときわ台</text><text x="560" y="60" font-size="9.5" fill="#48596b" font-weight="bold" text-anchor="middle" dominant-baseline="central" font-family="Liberation Sans" opacity="1" stroke="#f6f4ee" stroke-width="2" stroke-opacity="0.85" paint-order="stroke">十条</text><text x="611" y="94" font-size="9.5" fill="#48596b" font-weight="bold" text-anchor="middle" dominant-baseline="central" font-family="Liberation Sans" opacity="1" stroke="#f6f4ee" stroke-width="2" stroke-opacity="0.85" paint-order="stroke">王子</text><text x="565" y="128" font-size="9.5" fill="#48596b" font-weight="bold" text-anchor="middle" dominant-baseline="central" font-family="Liberation Sans" opacity="1" stroke="#f6f4ee" stroke-width="2" stroke-opacity="0.85" paint-order="stroke">北池袋</text><text x="371" y="113" font-size="9.5" fill="#48596b" font-weight="bold" text-anchor="middle" dominant-baseline="central" font-family="Liberation Sans" opacity="1" stroke="#f6f4ee" stroke-width="2" stroke-opacity="0.85" paint-order="stroke">豊島園</text><text x="466.5" y="121.5" font-size="9.5" fill="#48596b" font-weight="bold" text-anchor="middle" dominant-baseline="central" font-family="Liberation Sans" opacity="1" stroke="#f6f4ee" stroke-width="2" stroke-opacity="0.85" paint-order="stroke">小竹向原</text><text x="404" y="140" font-size="9.5" fill="#48596b" font-weight="bold" text-anchor="middle" dominant-baseline="central" font-family="Liberation Sans" opacity="1" stroke="#f6f4ee" stroke-width="2" stroke-opacity="0.85" paint-order="stroke">練馬</text><text x="333.5" y="159.5" font-size="9.5" fill="#48596b" font-weight="bold" text-anchor="middle" dominant-baseline="central" font-family="Liberation Sans" opacity="1" stroke="#f6f4ee" stroke-width="2" stroke-opacity="0.85" paint-order="stroke">下井草</text><text x="368" y="186" font-size="9.5" fill="#48596b" font-weight="bold" text-anchor="middle" dominant-baseline="central" font-family="Liberation Sans" opacity="1" stroke="#f6f4ee" stroke-width="2" stroke-opacity="0.85" paint-order="stroke">鷺ノ宮</text><text x="457.70000000000005" y="151" font-size="9.5" fill="#48596b" font-weight="bold" text-anchor="middle" dominant-baseline="central" font-family="Liberation Sans" opacity="1" stroke="#f6f4ee" stroke-width="2" stroke-opacity="0.85" paint-order="stroke">東長崎</text><text x="433.5" y="174.39999999999998" font-size="9.5" fill="#48596b" font-weight="bold" text-anchor="middle" dominant-baseline="central" font-family="Liberation Sans" opacity="1" stroke="#f6f4ee" stroke-width="2" stroke-opacity="0.85" paint-order="stroke">沼袋</text><text x="545" y="167.5" font-size="9.5" fill="#48596b" font-weight="bold" text-anchor="middle" dominant-baseline="central" font-family="Liberation Sans" opacity="1" stroke="#f6f4ee" stroke-width="2" stroke-opacity="0.85" paint-order="stroke">池袋</text><text x="507.70000000000005" y="172.60000000000002" font-size="9.5" fill="#48596b" font-weight="bold" text-anchor="middle" dominant-baseline="central" font-family="Liberation Sans" opacity="1" stroke="#f6f4ee" stroke-width="2" stroke-opacity="0.85" paint-order="stroke">椎名町</text><text x="627" y="186.5" font-size="9.5" fill="#48596b" font-weight="bold" text-anchor="middle" dominant-baseline="central" font-family="Liberation Sans" opacity="1" stroke="#f6f4ee" stroke-width="2" stroke-opacity="0.85" paint-order="stroke">拓殖大</text><text x="570" y="15.5" font-size="9.5" fill="#48596b" font-weight="bold" text-anchor="middle" dominant-baseline="central" font-family="Liberation Sans" opacity="1" stroke="#f6f4ee" stroke-width="2" stroke-opacity="0.85" paint-order="stroke">赤羽</text><text x="86" y="285" font-size="9.5" fill="#48596b" font-weight="bold" text-anchor="middle" dominant-baseline="central" font-family="Liberation Sans" opacity="1" stroke="#f6f4ee" stroke-width="2" stroke-opacity="0.85" paint-order="stroke">野川公園</text><text x="16" y="303" font-size="9.5" fill="#48596b" font-weight="bold" text-anchor="middle" dominant-baseline="central" font-family="Liberation Sans" opacity="1" stroke="#f6f4ee" stroke-width="2" stroke-opacity="0.85" paint-order="stroke">山公園</text><text x="66" y="304.6" font-size="9.5" fill="#48596b" font-weight="bold" text-anchor="middle" dominant-baseline="central" font-family="Liberation Sans" opacity="1" stroke="#f6f4ee" stroke-width="2" stroke-opacity="0.85" paint-order="stroke">多磨</text><text x="33" y="337" font-size="9.5" fill="#48596b" font-weight="bold" text-anchor="middle" dominant-baseline="central" font-family="Liberation Sans" opacity="1" stroke="#f6f4ee" stroke-width="2" stroke-opacity="0.85" paint-order="stroke">東府中</text><text x="97.5" y="337" font-size="9.5" fill="#48596b" font-weight="bold" text-anchor="middle" dominant-baseline="central" font-family="Liberation Sans" opacity="1" stroke="#f6f4ee" stroke-width="2" stroke-opacity="0.85" paint-order="stroke">調布飛行場</text><text x="102" y="364" font-size="9.5" fill="#48596b" font-weight="bold" text-anchor="middle" dominant-baseline="central" font-family="Liberation Sans" opacity="1" stroke="#f6f4ee" stroke-width="2" stroke-opacity="0.85" paint-order="stroke">飛田給</text><text x="46" y="385" font-size="9.5" fill="#48596b" font-weight="bold" text-anchor="middle" dominant-baseline="central" font-family="Liberation Sans" opacity="1" stroke="#f6f4ee" stroke-width="2" stroke-opacity="0.85" paint-order="stroke">競艇場前</text><text x="75" y="410" font-size="9.5" fill="#48596b" font-weight="bold" text-anchor="middle" dominant-baseline="central" font-family="Liberation Sans" opacity="1" stroke="#f6f4ee" stroke-width="2" stroke-opacity="0.85" paint-order="stroke">矢野口</text><text x="7" y="408" font-size="9.5" fill="#48596b" font-weight="bold" text-anchor="middle" dominant-baseline="central" font-family="Liberation Sans" opacity="1" stroke="#f6f4ee" stroke-width="2" stroke-opacity="0.85" paint-order="stroke">多摩</text><text x="518.7" y="281" font-size="9.5" fill="#48596b" font-weight="bold" text-anchor="middle" dominant-baseline="central" font-family="Liberation Sans" opacity="1" stroke="#f6f4ee" stroke-width="2" stroke-opacity="0.85" paint-order="stroke">新宿</text><text x="524" y="306.7" font-size="9.5" fill="#48596b" font-weight="bold" text-anchor="middle" dominant-baseline="central" font-family="Liberation Sans" opacity="1" stroke="#f6f4ee" stroke-width="2" stroke-opacity="0.85" paint-order="stroke">代々木</text><text x="523" y="382" font-size="9.5" fill="#48596b" font-weight="bold" text-anchor="middle" dominant-baseline="central" font-family="Liberation Sans" opacity="1" stroke="#f6f4ee" stroke-width="2" stroke-opacity="0.85" paint-order="stroke">渋谷</text><text x="568" y="406" font-size="9.5" fill="#48596b" font-weight="bold" text-anchor="middle" dominant-baseline="central" font-family="Liberation Sans" opacity="1" stroke="#f6f4ee" stroke-width="2" stroke-opacity="0.85" paint-order="stroke">恵比寿</text><text x="495.70000000000005" y="413" font-size="9.5" fill="#48596b" font-weight="bold" text-anchor="middle" dominant-baseline="central" font-family="Liberation Sans" opacity="1" stroke="#f6f4ee" stroke-width="2" stroke-opacity="0.85" paint-order="stroke">中目黒</text><text x="618" y="419" font-size="9.5" fill="#48596b" font-weight="bold" text-anchor="middle" dominant-baseline="central" font-family="Liberation Sans" opacity="1" stroke="#f6f4ee" stroke-width="2" stroke-opacity="0.85" paint-order="stroke">泉岳寺</text><text x="608" y="283" font-size="9.5" fill="#48596b" font-weight="bold" text-anchor="middle" dominant-baseline="central" font-family="Liberation Sans" opacity="1" stroke="#f6f4ee" stroke-width="2" stroke-opacity="0.85" paint-order="stroke">市ケ谷</text><text x="627" y="249" font-size="9.5" fill="#48596b" font-weight="bold" text-anchor="middle" dominant-baseline="central" font-family="Liberation Sans" opacity="1" stroke="#f6f4ee" stroke-width="2" stroke-opacity="0.85" paint-order="stroke">飯田橋</text><text x="557" y="265" font-size="9.5" fill="#48596b" font-weight="bold" text-anchor="middle" dominant-baseline="central" font-family="Liberation Sans" opacity="1" stroke="#f6f4ee" stroke-width="2" stroke-opacity="0.85" paint-order="stroke">防衛省</text><text x="484" y="349" font-size="9.5" fill="#48596b" font-weight="bold" text-anchor="middle" dominant-baseline="central" font-family="Liberation Sans" opacity="1" stroke="#f6f4ee" stroke-width="2" stroke-opacity="0.85" paint-order="stroke">上原</text><text x="97.5" y="67.30000000000001" font-size="14" fill="#4a4a4a" font-weight="normal" text-anchor="middle" dominant-baseline="central" font-family="Liberation Sans" opacity="1" stroke="#f6f4ee" stroke-width="2" stroke-opacity="0.85" paint-order="stroke">東久留米市</text><text x="541.5" y="89" font-size="14" fill="#4a4a4a" font-weight="normal" text-anchor="middle" dominant-baseline="central" font-family="Liberation Sans" opacity="1" stroke="#f6f4ee" stroke-width="2" stroke-opacity="0.85" paint-order="stroke">板橋区</text><text x="368" y="136" font-size="14" fill="#4a4a4a" font-weight="normal" text-anchor="middle" dominant-baseline="central" font-family="Liberation Sans" opacity="1" stroke="#f6f4ee" stroke-width="2" stroke-opacity="0.85" paint-order="stroke">練馬区</text><text x="560.4" y="181.3" font-size="14" fill="#4a4a4a" font-weight="normal" text-anchor="middle" dominant-baseline="central" font-family="Liberation Sans" opacity="1" stroke="#f6f4ee" stroke-width="2" stroke-opacity="0.85" paint-order="stroke">豊島区</text><text x="118" y="168" font-size="14" fill="#4a4a4a" font-weight="normal" text-anchor="middle" dominant-baseline="central" font-family="Liberation Sans" opacity="1" stroke="#f6f4ee" stroke-width="2" stroke-opacity="0.85" paint-order="stroke">西東京市</text><text x="150" y="190.60000000000002" font-size="14" fill="#4a4a4a" font-weight="normal" text-anchor="middle" dominant-baseline="central" font-family="Liberation Sans" opacity="1" stroke="#f6f4ee" stroke-width="2" stroke-opacity="0.85" paint-order="stroke">武蔵野市</text><text x="32" y="246" font-size="14" fill="#4a4a4a" font-weight="normal" text-anchor="middle" dominant-baseline="central" font-family="Liberation Sans" opacity="1" stroke="#f6f4ee" stroke-width="2" stroke-opacity="0.85" paint-order="stroke">小金井市</text><text x="132" y="394" font-size="14" fill="#4a4a4a" font-weight="normal" text-anchor="middle" dominant-baseline="central" font-family="Liberation Sans" opacity="1" stroke="#f6f4ee" stroke-width="2" stroke-opacity="0.85" paint-order="stroke">調布市</text><text x="36" y="433" font-size="14" fill="#4a4a4a" font-weight="normal" text-anchor="middle" dominant-baseline="central" font-family="Liberation Sans" opacity="1" stroke="#f6f4ee" stroke-width="2" stroke-opacity="0.85" paint-order="stroke">稲城市</text><text x="546" y="355" font-size="14" fill="#4a4a4a" font-weight="normal" text-anchor="middle" dominant-baseline="central" font-family="Liberation Sans" opacity="1" stroke="#f6f4ee" stroke-width="2" stroke-opacity="0.85" paint-order="stroke">渋谷区</text><rect x="275" y="70.5" width="22" height="14" fill="#6e7f5e" stroke="#dfe6d5" stroke-width="1"/><text x="235" y="47" font-size="9.5" fill="#46504f" font-weight="bold" text-anchor="middle" dominant-baseline="central" font-family="Liberation Sans" transform="rotate(24 235 47)">関越自動車道</text><text x="286" y="77.5" font-size="9" fill="#fff" font-weight="bold" text-anchor="middle" dominant-baseline="central" font-family="Liberation Sans" opacity="1">練馬</text><circle cx="30.30000000000001" cy="209.10000000000002" r="7.3" fill="#f1b27a" fill-opacity="0.8" stroke="#c3834c" stroke-width="1.2"/><circle cx="61.099999999999994" cy="201.2" r="7.3" fill="#6fbf5a" fill-opacity="0.8" stroke="#3f8d38" stroke-width="1.2"/><circle cx="54.5" cy="212.2" r="7.3" fill="#4d5894" fill-opacity="0.8" stroke="#1f2954" stroke-width="1.2"/><circle cx="19.599999999999994" cy="220.3" r="7.3" fill="#4d5894" fill-opacity="0.8" stroke="#1f2954" stroke-width="1.2"/><circle cx="18.099999999999994" cy="227.7" r="7.3" fill="#e89a9a" fill-opacity="0.8" stroke="#b36464" stroke-width="1.2"/><circle cx="37.69999999999999" cy="221.60000000000002" r="7.3" fill="#6fbf5a" fill-opacity="0.8" stroke="#3f8d38" stroke-width="1.2"/><circle cx="35.30000000000001" cy="230.2" r="7.3" fill="#e89a9a" fill-opacity="0.8" stroke="#b36464" stroke-width="1.2"/><circle cx="62" cy="233.89999999999998" r="7.3" fill="#f1b27a" fill-opacity="0.8" stroke="#c3834c" stroke-width="1.2"/><path d="M78.19999999999999,225.5 A7.3,7.3 0 0 0 78.19999999999999,240.10000000000002Z" fill="#e89a9a" fill-opacity="0.8"/><path d="M78.19999999999999,225.5 A7.3,7.3 0 0 1 78.19999999999999,240.10000000000002Z" fill="#6fbf5a" fill-opacity="0.8"/><circle cx="78.19999999999999" cy="232.8" r="7.3" fill="none" stroke="#3f8d38" stroke-width="1.2"/><path d="M78.19999999999999,225.5V240.10000000000002" stroke="#b36464" stroke-width="1"/><circle cx="101.19999999999999" cy="219.3" r="7.3" fill="#6fbf5a" fill-opacity="0.8" stroke="#3f8d38" stroke-width="1.2"/><circle cx="103.60000000000002" cy="243.60000000000002" r="7.3" fill="#6fbf5a" fill-opacity="0.8" stroke="#3f8d38" stroke-width="1.2"/><path d="M98.80000000000001,242.8 A7.3,7.3 0 0 0 98.80000000000001,257.40000000000003Z" fill="#e89a9a" fill-opacity="0.8"/><path d="M98.80000000000001,242.8 A7.3,7.3 0 0 1 98.80000000000001,257.40000000000003Z" fill="#6fbf5a" fill-opacity="0.8"/><circle cx="98.80000000000001" cy="250.10000000000002" r="7.3" fill="none" stroke="#3f8d38" stroke-width="1.2"/><path d="M98.80000000000001,242.8V257.40000000000003" stroke="#b36464" stroke-width="1"/><circle cx="99.89999999999998" cy="260.8" r="7.3" fill="#e89a9a" fill-opacity="0.8" stroke="#b36464" stroke-width="1.2"/><circle cx="66.30000000000001" cy="252" r="7.3" fill="#4d5894" fill-opacity="0.8" stroke="#1f2954" stroke-width="1.2"/><circle cx="54.5" cy="258.2" r="7.3" fill="#6fbf5a" fill-opacity="0.8" stroke="#3f8d38" stroke-width="1.2"/><circle cx="18.099999999999994" cy="266.9" r="7.3" fill="#6fbf5a" fill-opacity="0.8" stroke="#3f8d38" stroke-width="1.2"/><path d="M19.599999999999994,273.59999999999997 A7.3,7.3 0 0 0 19.599999999999994,288.2Z" fill="#e89a9a" fill-opacity="0.8"/><path d="M19.599999999999994,273.59999999999997 A7.3,7.3 0 0 1 19.599999999999994,288.2Z" fill="#9ca5c9" fill-opacity="0.8"/><circle cx="19.599999999999994" cy="280.9" r="7.3" fill="none" stroke="#5d6894" stroke-width="1.2"/><path d="M19.599999999999994,273.59999999999997V288.2" stroke="#b36464" stroke-width="1"/><circle cx="34" cy="286.2" r="7.3" fill="#9ca5c9" fill-opacity="0.8" stroke="#5d6894" stroke-width="1.2"/><circle cx="468.70000000000005" cy="158.2" r="7.3" fill="#e89a9a" fill-opacity="0.8" stroke="#b36464" stroke-width="1.2"/><circle cx="466.9" cy="187.10000000000002" r="7.3" fill="#e89a9a" fill-opacity="0.8" stroke="#b36464" stroke-width="1.2"/><circle cx="470.9" cy="185.60000000000002" r="7.3" fill="#6fbf5a" fill-opacity="0.8" stroke="#3f8d38" stroke-width="1.2"/><circle cx="498.9" cy="182.5" r="7.3" fill="#ab8bdb" fill-opacity="0.8" stroke="#7556a6" stroke-width="1.2"/><path d="M506.70000000000005,176.7 A7.3,7.3 0 0 0 506.70000000000005,191.3Z" fill="#e89a9a" fill-opacity="0.8"/><path d="M506.70000000000005,176.7 A7.3,7.3 0 0 1 506.70000000000005,191.3Z" fill="#4d5894" fill-opacity="0.8"/><circle cx="506.70000000000005" cy="184" r="7.3" fill="none" stroke="#1f2954" stroke-width="1.2"/><path d="M506.70000000000005,176.7V191.3" stroke="#b36464" stroke-width="1"/><circle cx="505.1" cy="194.89999999999998" r="7.3" fill="#4d5894" fill-opacity="0.8" stroke="#1f2954" stroke-width="1.2"/><circle cx="519.1" cy="194.89999999999998" r="7.3" fill="#6fbf5a" fill-opacity="0.8" stroke="#3f8d38" stroke-width="1.2"/><circle cx="523.8" cy="182.5" r="7.3" fill="#6fbf5a" fill-opacity="0.8" stroke="#3f8d38" stroke-width="1.2"/><circle cx="528.5" cy="185.60000000000002" r="7.3" fill="#6fbf5a" fill-opacity="0.8" stroke="#3f8d38" stroke-width="1.2"/><circle cx="492.70000000000005" cy="203.3" r="7.3" fill="#6fbf5a" fill-opacity="0.8" stroke="#3f8d38" stroke-width="1.2"/><circle cx="539.4" cy="204.2" r="7.3" fill="#f1b27a" fill-opacity="0.8" stroke="#c3834c" stroke-width="1.2"/><circle cx="546.5" cy="207.39999999999998" r="7.3" fill="#9ca5c9" fill-opacity="0.8" stroke="#5d6894" stroke-width="1.2"/><path d="M502,210.89999999999998 A7.3,7.3 0 0 0 502,225.5Z" fill="#e89a9a" fill-opacity="0.8"/><path d="M502,210.89999999999998 A7.3,7.3 0 0 1 502,225.5Z" fill="#6fbf5a" fill-opacity="0.8"/><circle cx="502" cy="218.2" r="7.3" fill="none" stroke="#3f8d38" stroke-width="1.2"/><path d="M502,210.89999999999998V225.5" stroke="#b36464" stroke-width="1"/><circle cx="515.4" cy="219.2" r="7.3" fill="#4d5894" fill-opacity="0.8" stroke="#1f2954" stroke-width="1.2"/><circle cx="526.9" cy="215.10000000000002" r="7.3" fill="#6fbf5a" fill-opacity="0.8" stroke="#3f8d38" stroke-width="1.2"/><circle cx="533.2" cy="216" r="7.3" fill="#f1b27a" fill-opacity="0.8" stroke="#c3834c" stroke-width="1.2"/><circle cx="494.20000000000005" cy="229.10000000000002" r="7.3" fill="#4d5894" fill-opacity="0.8" stroke="#1f2954" stroke-width="1.2"/><circle cx="495.79999999999995" cy="236.89999999999998" r="7.3" fill="#6fbf5a" fill-opacity="0.8" stroke="#3f8d38" stroke-width="1.2"/><circle cx="577.7" cy="219.8" r="7.3" fill="#e89a9a" fill-opacity="0.8" stroke="#b36464" stroke-width="1.2"/><circle cx="608.8" cy="223.5" r="7.3" fill="#6fbf5a" fill-opacity="0.8" stroke="#3f8d38" stroke-width="1.2"/><circle cx="615" cy="221.39999999999998" r="7.3" fill="#f1b27a" fill-opacity="0.8" stroke="#c3834c" stroke-width="1.2"/><path d="M603.2,226.5 A7.3,7.3 0 0 0 603.2,241.10000000000002Z" fill="#e89a9a" fill-opacity="0.8"/><path d="M603.2,226.5 A7.3,7.3 0 0 1 603.2,241.10000000000002Z" fill="#4d5894" fill-opacity="0.8"/><circle cx="603.2" cy="233.8" r="7.3" fill="none" stroke="#1f2954" stroke-width="1.2"/><path d="M603.2,226.5V241.10000000000002" stroke="#b36464" stroke-width="1"/><circle cx="526.9" cy="243.2" r="7.3" fill="#ab8bdb" fill-opacity="0.8" stroke="#7556a6" stroke-width="1.2"/><circle cx="540.9" cy="244.7" r="7.3" fill="#6fbf5a" fill-opacity="0.8" stroke="#3f8d38" stroke-width="1.2"/><path d="M551.8,232.7 A7.3,7.3 0 0 0 551.8,247.3Z" fill="#e89a9a" fill-opacity="0.8"/><path d="M551.8,232.7 A7.3,7.3 0 0 1 551.8,247.3Z" fill="#4d5894" fill-opacity="0.8"/><circle cx="551.8" cy="240" r="7.3" fill="none" stroke="#1f2954" stroke-width="1.2"/><path d="M551.8,232.7V247.3" stroke="#b36464" stroke-width="1"/><circle cx="573.6" cy="244.7" r="7.3" fill="#e89a9a" fill-opacity="0.8" stroke="#b36464" stroke-width="1.2"/><circle cx="586" cy="247.2" r="7.3" fill="#6fbf5a" fill-opacity="0.8" stroke="#3f8d38" stroke-width="1.2"/><circle cx="550.3" cy="259.6" r="7.3" fill="#4d5894" fill-opacity="0.8" stroke="#1f2954" stroke-width="1.2"/><circle cx="489.6" cy="274.3" r="7.3" fill="#e89a9a" fill-opacity="0.8" stroke="#b36464" stroke-width="1.2"/><circle cx="537.2" cy="274.3" r="7.3" fill="#6fbf5a" fill-opacity="0.8" stroke="#3f8d38" stroke-width="1.2"/><circle cx="565.8" cy="278.9" r="7.3" fill="#f1b27a" fill-opacity="0.8" stroke="#c3834c" stroke-width="1.2"/><circle cx="561.2" cy="285.8" r="7.3" fill="#6fbf5a" fill-opacity="0.8" stroke="#3f8d38" stroke-width="1.2"/><circle cx="567.4" cy="284.5" r="7.3" fill="#9ca5c9" fill-opacity="0.8" stroke="#5d6894" stroke-width="1.2"/><circle cx="578.3" cy="271.2" r="7.3" fill="#6fbf5a" fill-opacity="0.8" stroke="#3f8d38" stroke-width="1.2"/><circle cx="590.7" cy="272.1" r="7.3" fill="#6fbf5a" fill-opacity="0.8" stroke="#3f8d38" stroke-width="1.2"/><circle cx="591.7" cy="20" r="13.5" fill="#fff" stroke="#222" stroke-width="1.4"/><path d="M584.7,20H598.7" stroke="#333" stroke-width="1.5"/><path d="M591.7,13V27" stroke="#333" stroke-width="1.5"/><circle cx="591.7" cy="67.30000000000001" r="13.5" fill="#fff" stroke="#222" stroke-width="1.4"/><path d="M584.7,67.30000000000001H598.7" stroke="#333" stroke-width="1.5"/><rect x="4" y="429" width="4.5" height="4.5" fill="#f25022"/><rect x="9" y="429" width="4.5" height="4.5" fill="#7fba00"/><rect x="4" y="434" width="4.5" height="4.5" fill="#00a4ef"/><rect x="9" y="434" width="4.5" height="4.5" fill="#ffb900"/><text x="474" y="435" font-size="8.5" fill="#222" dominant-baseline="central" font-family="Liberation Sans">© 2022 Microsoft Corporation</text><text x="589" y="435" font-size="8.5" fill="#222" dominant-baseline="central" text-decoration="underline" font-family="Liberation Sans">Terms</text></svg>

<div class="a" style="left:813px;top:99px;width:255px;height:30px;border:1px solid #d0a4a0;background:#fff"></div>
<div class="l" style="left:813px;top:107px;width:255px;text-align:center;font-size:9.5px;line-height:13px;color:#b05050">検索条件 クリア</div>
<div class="sec" style="left:813px;top:134px;width:255px;height:14px">サービスで選ぶ</div>
<div class="a" style="left:813px;top:153px;width:255px;height:59px;border:1px solid #cfcfcf;border-radius:5px;background:#fafafa"></div>
<div class="btn" style="left:821px;top:162px;width:56px;height:16px;font-size:9px;line-height:14px">介護付</div>
<div class="btn" style="left:881px;top:162px;width:55px;height:16px;font-size:9px;line-height:14px">住宅型</div>
<div class="btn" style="left:940px;top:162px;width:56px;height:16px;font-size:9px;line-height:14px">サ高住</div>
<div class="btn" style="left:1000px;top:162px;width:56px;height:16px;font-size:9px;line-height:14px">特　養</div>
<div class="btn" style="left:821px;top:182px;width:56px;height:16px;font-size:9px;line-height:14px">老　健</div>
<div class="btn" style="left:881px;top:182px;width:55px;height:16px;font-size:9px;line-height:14px">療養病床</div>
<div class="btn" style="left:940px;top:182px;width:56px;height:16px;font-size:9px;line-height:14px">Ｇ　Ｈ</div>
<div class="btn" style="left:1000px;top:182px;width:56px;height:16px;font-size:9px;line-height:14px">ケアハウ...</div>
<div class="sec" style="left:813px;top:214px;width:255px;height:14px">場所で選ぶ</div>
<div class="gbox" style="left:813px;top:231px;width:255px;height:51px"></div>
<div class="l" style="left:825px;top:236px;font-size:10px;line-height:14px;color:#444;">エリア</div>
<div class="a" style="left:823px;top:257px;width:235px;height:22px;background:#fff"></div>
<div class="l" style="left:828px;top:262px;font-size:9.5px;line-height:13.5px;color:#555;">すべて</div>
<svg class="a" style="left:1043px;top:265px" width="12" height="8"><path d="M1 1.5L6 6.5L11 1.5" fill="none" stroke="#777" stroke-width="1.1"/></svg>
<div class="gbox" style="left:813px;top:286px;width:255px;height:39px;overflow:hidden"><div class="a" style="left:0;top:0;width:240px;height:34px;overflow:hidden"><div class="btn" style="left:7px;top:7px;width:50px;height:15px;font-size:9px;line-height:13px">北海道</div><div class="btn" style="left:62px;top:7px;width:50px;height:15px;font-size:9px;line-height:13px">青森県</div><div class="btn" style="left:117px;top:7px;width:49px;height:15px;font-size:9px;line-height:13px">岩手県</div><div class="btn" style="left:173px;top:7px;width:49px;height:15px;font-size:9px;line-height:13px">宮城県</div><div class="btn" style="left:7px;top:27px;width:50px;height:15px;font-size:9px;line-height:13px">秋田県</div><div class="btn" style="left:62px;top:27px;width:50px;height:15px;font-size:9px;line-height:13px">山形県</div><div class="btn" style="left:117px;top:27px;width:49px;height:15px;font-size:9px;line-height:13px">福島県</div><div class="btn" style="left:173px;top:27px;width:49px;height:15px;font-size:9px;line-height:13px">茨城県</div></div><svg class="a" style="left:237px;top:10px" width="10" height="6"><path d="M0.5 5L4.5 1L8.5 5Z" fill="#999"/></svg></div>
<div class="a" style="left:1014px;top:303px;width:24px;height:22px;background:#fff"></div>
<svg class="a" style="left:1014px;top:303px" width="24" height="22"><path d="M4 5.8H19.8L13.6 12.9V18.7H10.4V12.9Z" fill="none" stroke="#666" stroke-width="1.1" stroke-linejoin="miter"/></svg>
<div class="a" style="left:1042px;top:303px;width:24px;height:22px;background:#fff"></div>
<svg class="a" style="left:1042px;top:303px" width="24" height="22"><g fill="none" stroke="#666" stroke-width="1.1"><path d="M11.5 7.4H5.4V18.7H18.6V12"/><path d="M5.4 14.2H11.5V18.7"/><path d="M13 12.5L18.6 7M15 7.4H18.6V11"/></g></svg>
<div class="gbox" style="left:813px;top:327px;width:255px;height:245px"></div>
<div class="a" style="left:814px;top:330px;width:230px;height:238px;overflow:hidden"><div class="btn" style="left:6.6px;top:5.1px;width:64.9px;height:14.5px;font-size:9px;line-height:12.5px;">(Blank)</div><div class="btn" style="left:77.3px;top:5.1px;width:64.7px;height:14.5px;font-size:9px;line-height:12.5px;">あきる野市</div><div class="btn" style="left:147.8px;top:5.1px;width:64.8px;height:14.5px;font-size:9px;line-height:12.5px;">稲城市</div><div class="btn" style="left:6.6px;top:25.3px;width:64.9px;height:14.5px;font-size:9px;line-height:12.5px;">羽村市</div><div class="btn" style="left:77.3px;top:25.3px;width:64.7px;height:14.5px;font-size:9px;line-height:12.5px;">葛飾区</div><div class="btn" style="left:147.8px;top:25.3px;width:64.8px;height:14.5px;font-size:9px;line-height:12.5px;">江戸川区</div><div class="btn" style="left:6.6px;top:45.5px;width:64.9px;height:14.5px;font-size:9px;line-height:12.5px;">江東区</div><div class="btn" style="left:77.3px;top:45.5px;width:64.7px;height:14.5px;font-size:9px;line-height:12.5px;">港区</div><div class="btn" style="left:147.8px;top:45.5px;width:64.8px;height:14.5px;font-size:9px;line-height:12.5px;">荒川区</div><div class="btn" style="left:6.6px;top:65.7px;width:64.9px;height:14.5px;font-size:9px;line-height:12.5px;">国分寺市</div><div class="btn" style="left:77.3px;top:65.7px;width:64.7px;height:14.5px;font-size:9px;line-height:12.5px;">国立市</div><div class="btn" style="left:147.8px;top:65.7px;width:64.8px;height:14.5px;font-size:9px;line-height:12.5px;">狛江市</div><div class="btn" style="left:6.6px;top:85.9px;width:64.9px;height:14.5px;font-size:9px;line-height:12.5px;">三鷹市</div><div class="btn" style="left:77.3px;top:85.9px;width:64.7px;height:14.5px;font-size:9px;line-height:12.5px;">渋谷区</div><div class="btn" style="left:147.8px;top:85.9px;width:64.8px;height:14.5px;font-size:9px;line-height:12.5px;background:#e08f8f;border-color:#d98a8a;color:#9a4a4a;">小金井市</div><div class="btn" style="left:6.6px;top:106.1px;width:64.9px;height:14.5px;font-size:9px;line-height:12.5px;">小平市</div><div class="btn" style="left:77.3px;top:106.1px;width:64.7px;height:14.5px;font-size:9px;line-height:12.5px;">昭島市</div><div class="btn" style="left:147.8px;top:106.1px;width:64.8px;height:14.5px;font-size:9px;line-height:12.5px;background:#e08f8f;border-color:#d98a8a;color:#9a4a4a;">新宿区</div><div class="btn" style="left:6.6px;top:126.3px;width:64.9px;height:14.5px;font-size:9px;line-height:12.5px;">杉並区</div><div class="btn" style="left:77.3px;top:126.3px;width:64.7px;height:14.5px;font-size:9px;line-height:12.5px;">世田谷区</div><div class="btn" style="left:147.8px;top:126.3px;width:64.8px;height:14.5px;font-size:9px;line-height:12.5px;">清瀬市</div><div class="btn" style="left:6.6px;top:146.5px;width:64.9px;height:14.5px;font-size:9px;line-height:12.5px;">西多摩郡奥...</div><div class="btn" style="left:77.3px;top:146.5px;width:64.7px;height:14.5px;font-size:9px;line-height:12.5px;">西多摩郡瑞...</div><div class="btn" style="left:147.8px;top:146.5px;width:64.8px;height:14.5px;font-size:9px;line-height:12.5px;">西多摩郡日...</div><div class="btn" style="left:6.6px;top:166.7px;width:64.9px;height:14.5px;font-size:9px;line-height:12.5px;">西多摩郡檜...</div><div class="btn" style="left:77.3px;top:166.7px;width:64.7px;height:14.5px;font-size:9px;line-height:12.5px;">西東京市</div><div class="btn" style="left:147.8px;top:166.7px;width:64.8px;height:14.5px;font-size:9px;line-height:12.5px;">青梅市</div><div class="btn" style="left:6.6px;top:186.9px;width:64.9px;height:14.5px;font-size:9px;line-height:12.5px;">千代田区</div><div class="btn" style="left:77.3px;top:186.9px;width:64.7px;height:14.5px;font-size:9px;line-height:12.5px;">足立区</div><div class="btn" style="left:147.8px;top:186.9px;width:64.8px;height:14.5px;font-size:9px;line-height:12.5px;">多摩市</div><div class="btn" style="left:6.6px;top:207.1px;width:64.9px;height:14.5px;font-size:9px;line-height:12.5px;">台東区</div><div class="btn" style="left:77.3px;top:207.1px;width:64.7px;height:14.5px;font-size:9px;line-height:12.5px;">大田区</div><div class="btn" style="left:147.8px;top:207.1px;width:64.8px;height:14.5px;font-size:9px;line-height:12.5px;">中央区</div><div class="btn" style="left:6.6px;top:227.3px;width:64.9px;height:14.5px;font-size:9px;line-height:12.5px;">中野区</div><div class="btn" style="left:77.3px;top:227.3px;width:64.7px;height:14.5px;font-size:9px;line-height:12.5px;">町田市</div><div class="btn" style="left:147.8px;top:227.3px;width:64.8px;height:14.5px;font-size:9px;line-height:12.5px;">調布市</div></div>
<div class="a" style="left:1047.6px;top:334px;width:15px;height:230px;background:#e6e6e6"></div>
<div class="a" style="left:1048.4px;top:350px;width:14.4px;height:127.6px;background:#c2c2c2"></div>
<svg class="a" style="left:1050px;top:338px" width="10" height="7"><path d="M0 6L5 1L10 6Z" fill="#999"/></svg>
<svg class="a" style="left:1050px;top:553px" width="10" height="7"><path d="M0 1L5 6L10 1Z" fill="#444"/></svg>
<div class="gbox" style="left:813px;top:575px;width:255px;height:50px"></div>
<div class="l" style="left:826px;top:580px;font-size:10px;line-height:14px;color:#444;">町域</div>
<div class="a" style="left:823px;top:601px;width:235px;height:22px;background:#fff"></div>
<div class="l" style="left:828px;top:606px;font-size:9.5px;line-height:13.5px;color:#555;">すべて</div>
<svg class="a" style="left:1043px;top:609px" width="12" height="8"><path d="M1 1.5L6 6.5L11 1.5" fill="none" stroke="#777" stroke-width="1.1"/></svg>
<div class="a" style="left:11px;top:636px;width:1048px;height:7px;background:#4b5688;overflow:hidden"><div class="a" style="left:45px;top:0;width:1px;height:7px;background:#8a93b8"></div><div class="a" style="left:153px;top:0;width:1px;height:7px;background:#8a93b8"></div><div class="a" style="left:203px;top:0;width:1px;height:7px;background:#8a93b8"></div><div class="a" style="left:259px;top:0;width:1px;height:7px;background:#8a93b8"></div><div class="a" style="left:784px;top:0;width:1px;height:7px;background:#8a93b8"></div><div class="a" style="left:862px;top:0;width:1px;height:7px;background:#8a93b8"></div><div class="a" style="left:897px;top:0;width:1px;height:7px;background:#8a93b8"></div><div class="a" style="left:947px;top:0;width:1px;height:7px;background:#8a93b8"></div><div class="a" style="left:1007px;top:0;width:1px;height:7px;background:#8a93b8"></div><div class="l" style="left:5px;top:2px;font-size:10px;line-height:12px;color:#fff">都道府県</div><div class="l" style="left:89px;top:2px;font-size:10px;line-height:12px;color:#fff">住所</div><div class="l" style="left:161px;top:2px;font-size:10px;line-height:12px;color:#fff">サービス</div><div class="l" style="left:217px;top:2px;font-size:10px;line-height:12px;color:#fff">ホーム名</div><div class="l" style="left:804px;top:2px;font-size:10px;line-height:12px;color:#fff">電話番号</div><div class="l" style="left:869px;top:2px;font-size:10px;line-height:12px;color:#fff">定員数</div><div class="l" style="left:905px;top:2px;font-size:10px;line-height:12px;color:#fff">入居率</div><div class="l" style="left:957px;top:2px;font-size:10px;line-height:12px;color:#fff">開設年月</div><div class="l" style="left:1015px;top:2px;font-size:10px;line-height:12px;color:#fff">運営企業</div></div>
<div class="a" style="left:288px;top:377px;width:355px;height:270px;background:rgba(53,53,54,0.965)"></div>
<svg class="a" style="left:280px;top:379px" width="9" height="24"><path d="M8.5 0V23L1 11.5Z" fill="rgba(53,53,54,0.965)"/></svg>
<div class="l" style="left:290px;top:393.8px;width:86px;text-align:right;font-size:12px;line-height:16px;color:#d8d8d8">サービス</div>
<div class="l" style="left:388px;top:393.8px;font-size:12px;line-height:16px;color:#f2f2f2;font-weight:normal">介護付</div>
<div class="l" style="left:290px;top:414.6px;width:86px;text-align:right;font-size:12px;line-height:16px;color:#d8d8d8">●緯度</div>
<div class="l" style="left:388px;top:414.6px;font-size:12px;line-height:16px;color:#f2f2f2;font-weight:bold">35.7080164150309</div>
<div class="l" style="left:290px;top:434.2px;width:86px;text-align:right;font-size:12px;line-height:16px;color:#d8d8d8">●経度</div>
<div class="l" style="left:388px;top:434.2px;font-size:12px;line-height:16px;color:#f2f2f2;font-weight:bold">139.530933435546</div>
<div class="l" style="left:290px;top:454.1px;width:86px;text-align:right;font-size:12px;line-height:16px;color:#d8d8d8">ホーム名</div>
<div class="l" style="left:388px;top:454.1px;font-size:12px;line-height:16px;color:#f2f2f2;font-weight:normal">グランダ東小金井</div>
<div class="l" style="left:290px;top:474.5px;width:86px;text-align:right;font-size:12px;line-height:16px;color:#d8d8d8">協力医療機関</div>
<div class="l" style="left:388px;top:474.5px;font-size:12px;line-height:16px;color:#f2f2f2;font-weight:bold">●医療法人社団 岡田医院</div>
<div class="l" style="left:388px;top:492.4px;font-size:12px;line-height:16px;color:#fff;font-weight:bold">東京都練馬区関町北 1 丁目 8 番 9 号</div>
<div class="l" style="left:388px;top:510.5px;font-size:12px;line-height:16px;color:#fff;font-weight:bold">●医療法人社団 栄友会 府中ゆずクリニック</div>
<div class="l" style="left:388px;top:528.7px;font-size:12px;line-height:16px;color:#fff;font-weight:bold">東京都府中市白糸台1-63-1 リレ府中白糸台1F</div>
<div class="l" style="left:388px;top:546.9px;font-size:12px;line-height:16px;color:#fff;font-weight:bold">●医療法人社団 永寿会 三鷹中央病院</div>
<div class="l" style="left:388px;top:565.0px;font-size:12px;line-height:16px;color:#fff;font-weight:bold">東京都三鷹市上連雀５－２３－１０</div>
<div class="l" style="left:388px;top:583.1px;font-size:12px;line-height:16px;color:#fff;font-weight:bold">●医療法人 徳洲会 武蔵野徳洲会病院</div>
<div class="l" style="left:388px;top:601.3px;font-size:12px;line-height:16px;color:#fff;font-weight:bold">東京都西東京市向台町 3 丁目 5 番 48 号</div>
<div class="l" style="left:388px;top:619.4px;font-size:12px;line-height:16px;color:#fff;font-weight:bold">●社会福祉法人 聖ヨハネ会 桜町病院</div>
<div class="l" style="left:388px;top:637.6px;font-size:12px;line-height:16px;color:#fff;font-weight:bold">東京都小金井市桜町 1 丁目 2 番 20 号</div>

</body></html>
